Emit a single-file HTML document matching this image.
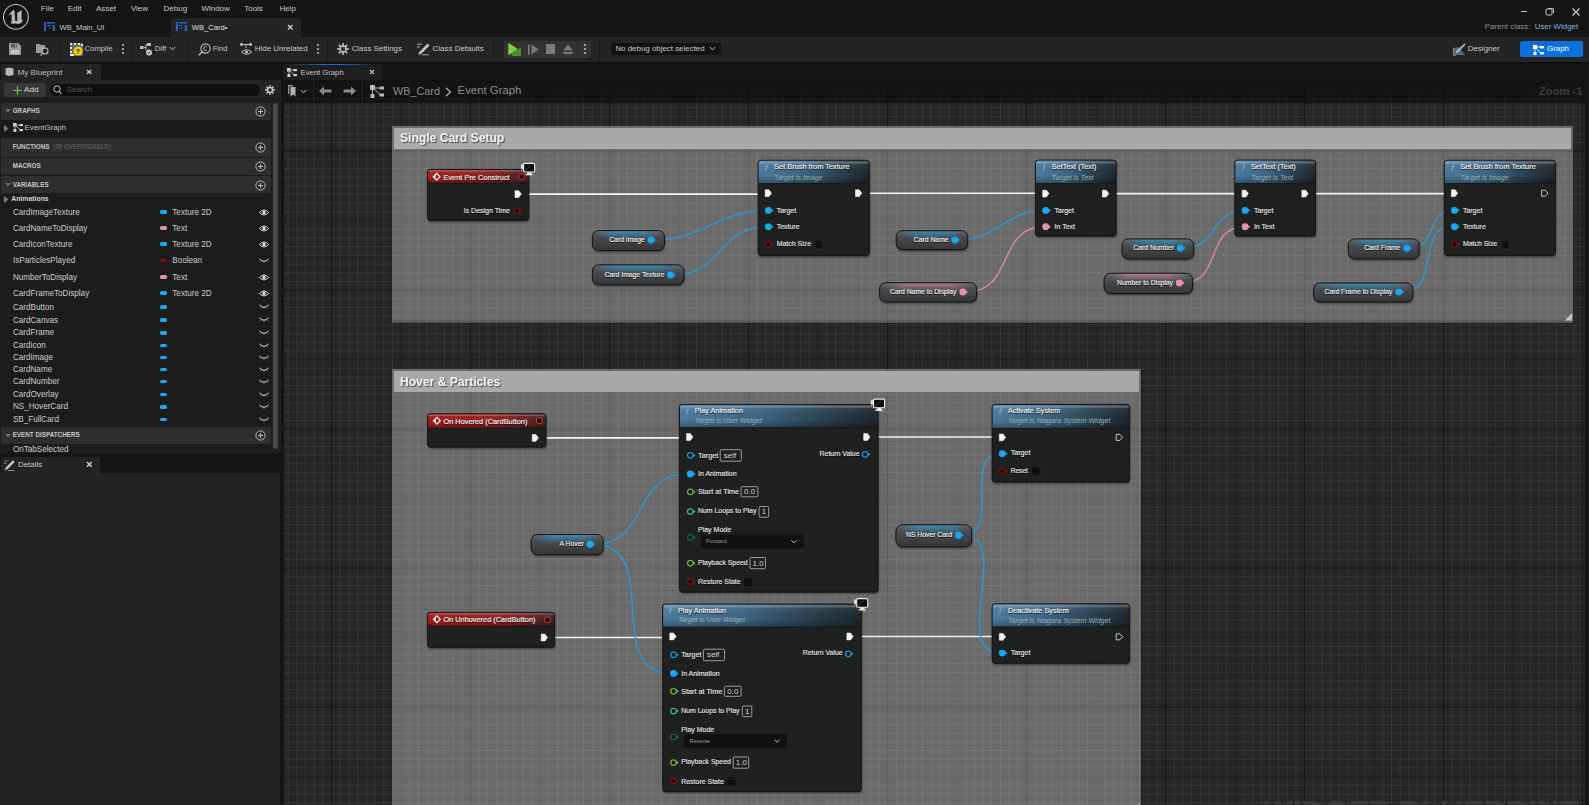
<!DOCTYPE html><html><head><meta charset="utf-8"><style>
html,body{margin:0;padding:0;width:1589px;height:805px;overflow:hidden;background:#151515;font-family:"Liberation Sans",sans-serif;}
.t{position:absolute;white-space:nowrap;line-height:1;}
.r{position:absolute;}
svg{position:absolute;}
</style></head><body>

<div class="r" style="left:0.00px;top:0.00px;width:1589.00px;height:37.00px;background:#151515;"></div>
<svg style="left:0px;top:0px" width="32" height="32" viewBox="0 0 32 32">
<circle cx="15.9" cy="16.9" r="12.4" fill="none" stroke="#bdbdbd" stroke-width="1.1"/>
<path d="M8.1 15.7 Q10.5 12 13.6 9.7 L14.6 11.3 L15.2 20.5 Q16 21.5 17.3 20.8 L17.2 13.1 Q19.4 11 22.1 10.3 Q21.4 12.5 21.6 14 L21.6 19.5 Q22.2 20.2 23.3 19.7 Q21.8 23.3 19.1 23.8 Q17.5 24.2 15.6 23.2 Q13.2 24.6 10.9 22.9 Q11.8 21.5 11.6 19.5 L11.6 14.6 Q9.8 14.7 8.1 15.7 Z" fill="#b4b4b4"/>
</svg>
<div class="t" style="left:40.80px;top:4.60px;font-size:8px;color:#c8c8c8;">File</div>
<div class="t" style="left:67.70px;top:4.60px;font-size:8px;color:#c8c8c8;">Edit</div>
<div class="t" style="left:95.90px;top:4.60px;font-size:8px;color:#c8c8c8;">Asset</div>
<div class="t" style="left:130.90px;top:4.60px;font-size:8px;color:#c8c8c8;">View</div>
<div class="t" style="left:163.60px;top:4.60px;font-size:8px;color:#c8c8c8;">Debug</div>
<div class="t" style="left:201.40px;top:4.60px;font-size:8px;color:#c8c8c8;">Window</div>
<div class="t" style="left:244.20px;top:4.60px;font-size:8px;color:#c8c8c8;">Tools</div>
<div class="t" style="left:279.40px;top:4.60px;font-size:8px;color:#c8c8c8;">Help</div>
<div class="r" style="left:171.00px;top:17.60px;width:130.00px;height:19.40px;background:#242424;border-radius:3px 3px 0 0;"></div>
<svg style="left:43.8px;top:22px" width="11" height="9" viewBox="0 0 11 9"><rect x="0" y="0" width="2" height="9" fill="#2d5fb0"/><rect x="3" y="0" width="8" height="1.6" fill="#2d5fb0"/><rect x="3" y="3" width="3.2" height="1.4" fill="#2d5fb0"/><rect x="8.6" y="3" width="2.4" height="6" fill="#2d5fb0"/><path d="M4.5 5.5 L7 5.5 L5.8 7 Z" fill="#2d5fb0"/></svg>
<div class="t" style="left:59.60px;top:23.74px;font-size:7.6px;color:#c8c8c8;">WB_Main_UI</div>
<svg style="left:176px;top:22px" width="11" height="9" viewBox="0 0 11 9"><rect x="0" y="0" width="2" height="9" fill="#2d5fb0"/><rect x="3" y="0" width="8" height="1.6" fill="#2d5fb0"/><rect x="3" y="3" width="3.2" height="1.4" fill="#2d5fb0"/><rect x="8.6" y="3" width="2.4" height="6" fill="#2d5fb0"/><path d="M4.5 5.5 L7 5.5 L5.8 7 Z" fill="#2d5fb0"/></svg>
<div class="t" style="left:191.80px;top:23.74px;font-size:7.6px;color:#e0e0e0;">WB_Card•</div>
<svg style="left:287.00px;top:24.20px" width="6.50" height="6.50"><path d="M1 1 L5.50 5.50 M5.50 1 L1 5.50" stroke="#d0d0d0" stroke-width="1.3"/></svg>
<div class="r" style="left:1520.70px;top:10.80px;width:6.00px;height:1.00px;background:#bfbfbf;"></div>
<svg style="left:1545px;top:7px" width="10" height="9" viewBox="0 0 10 9"><rect x="1" y="2" width="6" height="6" rx="1" fill="none" stroke="#c0c0c0" stroke-width="1"/><path d="M3 1.5 H8 Q8.5 1.5 8.5 2 V6" fill="none" stroke="#c0c0c0" stroke-width="1"/></svg>
<svg style="left:1571px;top:7px" width="10" height="10" viewBox="0 0 10 10"><path d="M1.5 1.5 L8.5 8.5 M8.5 1.5 L1.5 8.5" stroke="#d0d0d0" stroke-width="1.1"/></svg>
<div class="t" style="left:1484.80px;top:22.79px;font-size:7.9px;color:#8d8d8d;">Parent class:</div>
<div class="t" style="left:1534.70px;top:22.79px;font-size:7.9px;color:#7fb2ea;">User Widget</div>
<div class="r" style="left:0.00px;top:37.00px;width:1589.00px;height:25.00px;background:#242424;"></div>
<div class="r" style="left:59.00px;top:38.00px;width:1.00px;height:23.00px;background:#1b1b1b;"></div>
<div class="r" style="left:131.50px;top:38.00px;width:1.00px;height:23.00px;background:#1b1b1b;"></div>
<div class="r" style="left:187.50px;top:38.00px;width:1.00px;height:23.00px;background:#1b1b1b;"></div>
<div class="r" style="left:326.60px;top:38.00px;width:1.00px;height:23.00px;background:#1b1b1b;"></div>
<div class="r" style="left:492.60px;top:38.00px;width:1.00px;height:23.00px;background:#1b1b1b;"></div>
<div class="r" style="left:599.00px;top:38.00px;width:1.00px;height:23.00px;background:#1b1b1b;"></div>
<svg style="left:8.8px;top:43px" width="12" height="12" viewBox="0 0 12 12"><path d="M0 0 H9 L12 3 V12 H0 Z" fill="#9a9a9a"/><rect x="2" y="0.8" width="6" height="3.6" fill="#5a5a5a"/><rect x="6" y="1.3" width="1.2" height="2.4" fill="#9a9a9a"/><rect x="2" y="7" width="8" height="3.8" fill="#c8c8c8"/></svg>
<svg style="left:35.9px;top:43px" width="13" height="13" viewBox="0 0 13 13"><path d="M0 1 H4 L5 2 H9 V6 H6 V10 H0 Z" fill="#9a9a9a"/><circle cx="9" cy="8" r="3" fill="none" stroke="#bdbdbd" stroke-width="1.1"/><path d="M7 10 L4.5 12.5" stroke="#bdbdbd" stroke-width="1.2"/></svg>
<svg style="left:69.6px;top:43px" width="13" height="13" viewBox="0 0 13 13"><rect x="0" y="0" width="13" height="13" fill="#9a9a9a" opacity="0.55"/><path d="M0 0h2v2h-2zM4 0h2v2h-2zM8 0h2v2h-2zM11 1h2v2h-2zM0 4h2v2h-2zM0 8h2v2h-2zM0 11h4v2h-4z" fill="#e8e8e8"/><circle cx="8" cy="8" r="4.6" fill="#f0d000"/><text x="8" y="10.6" font-size="7" font-weight="bold" text-anchor="middle" fill="#222" font-family="Liberation Sans">?</text></svg>
<div class="t" style="left:84.60px;top:45.19px;font-size:7.66px;color:#c8c8c8;">Compile</div>
<div class="r" style="left:122.00px;top:43.90px;width:2.00px;height:2.00px;background:#a8a8a8;border-radius:0.5px;"></div>
<div class="r" style="left:122.00px;top:48.00px;width:2.00px;height:2.00px;background:#a8a8a8;border-radius:0.5px;"></div>
<div class="r" style="left:122.00px;top:52.10px;width:2.00px;height:2.00px;background:#a8a8a8;border-radius:0.5px;"></div>
<svg style="left:139.7px;top:43px" width="13" height="13" viewBox="0 0 13 13"><rect x="0" y="3" width="3.5" height="3" fill="#bbb"/><rect x="7" y="0" width="4" height="3" fill="#bbb"/><path d="M3.5 4.5 H6 V1.5 H7 M6 4.5 V7" stroke="#bbb" stroke-width="1" fill="none"/><circle cx="9" cy="9.5" r="3" fill="#ccc"/><path d="M7.6 9.5 L8.7 10.6 L10.5 8.5" stroke="#333" stroke-width="1" fill="none"/></svg>
<div class="t" style="left:154.80px;top:45.16px;font-size:7.7px;color:#c8c8c8;">Diff</div>
<svg style="left:169px;top:46px" width="7" height="5" viewBox="0 0 7 5"><path d="M0.8 1 L3.5 3.8 L6.2 1" stroke="#c0c0c0" stroke-width="1" fill="none"/></svg>
<svg style="left:198px;top:43px" width="13" height="13" viewBox="0 0 13 13"><circle cx="7.5" cy="5.5" r="4.6" fill="none" stroke="#c0c0c0" stroke-width="1.1"/><path d="M4.2 8.8 L0.8 12.2" stroke="#c0c0c0" stroke-width="1.3"/><path d="M8.8 3.8 A2 2 0 1 0 8.8 7.2" stroke="#c0c0c0" stroke-width="1" fill="none"/></svg>
<div class="t" style="left:212.70px;top:45.24px;font-size:7.6px;color:#c8c8c8;">Find</div>
<svg style="left:239.7px;top:43px" width="13" height="13" viewBox="0 0 13 13"><circle cx="1.5" cy="1.5" r="1.4" fill="#ccc"/><circle cx="10.5" cy="1.5" r="1.4" fill="#ccc"/><path d="M1.5 1.5 H10.5 M6 1.5 V5" stroke="#ccc" stroke-width="0.9"/><path d="M1.5 9 Q6.5 4.5 11.5 9 Q6.5 13.5 1.5 9Z" fill="none" stroke="#ccc" stroke-width="0.9"/><circle cx="6.5" cy="9" r="1.4" fill="#ccc"/></svg>
<div class="t" style="left:254.80px;top:44.96px;font-size:7.93px;color:#c8c8c8;">Hide Unrelated</div>
<div class="r" style="left:316.60px;top:43.90px;width:2.00px;height:2.00px;background:#a8a8a8;border-radius:0.5px;"></div>
<div class="r" style="left:316.60px;top:48.00px;width:2.00px;height:2.00px;background:#a8a8a8;border-radius:0.5px;"></div>
<div class="r" style="left:316.60px;top:52.10px;width:2.00px;height:2.00px;background:#a8a8a8;border-radius:0.5px;"></div>
<svg style="left:337.3px;top:43px" width="12" height="12" viewBox="0 0 12 12"><g stroke="#c0c0c0" stroke-width="1.6"><path d="M6 0 V12 M0 6 H12 M1.8 1.8 L10.2 10.2 M10.2 1.8 L1.8 10.2"/></g><circle cx="6" cy="6" r="3.8" fill="#c0c0c0"/><rect x="4" y="4" width="4" height="4" fill="#3a3a3a"/></svg>
<div class="t" style="left:351.70px;top:45.01px;font-size:7.87px;color:#c8c8c8;">Class Settings</div>
<svg style="left:417px;top:43px" width="13" height="13" viewBox="0 0 13 13"><path d="M0 1.2 H5 M0 4 H3" stroke="#bbb" stroke-width="0.9"/><path d="M10.5 0.5 L12.5 2.5 L4 11 L1.5 12 L2 9.5 Z" fill="#c8c8c8"/><path d="M5 11.8 H12" stroke="#bbb" stroke-width="0.9"/></svg>
<div class="t" style="left:432.60px;top:44.95px;font-size:7.94px;color:#c8c8c8;">Class Defaults</div>
<div class="r" style="left:504.00px;top:40.70px;width:87.00px;height:17.00px;background:#333333;border-radius:2px;"></div>
<div class="r" style="left:577.00px;top:40.70px;width:1.00px;height:17.00px;background:#2a2a2a;"></div>
<svg style="left:508px;top:42.5px" width="14" height="13" viewBox="0 0 14 13"><path d="M0.5 0 L9.5 6 L0.5 12 Z" fill="#72c43e"/><path d="M3.5 8 L13 5 V13 H3.5 Z" fill="#4d8b2c"/><path d="M0.5 0 L9.5 6 L0.5 12 Z" fill="#7fd447" opacity="0.9"/></svg>
<svg style="left:527.9px;top:43.5px" width="11" height="11" viewBox="0 0 11 11"><rect x="0" y="0.5" width="1.7" height="10" fill="#7a7a7a"/><path d="M3.5 0.5 L10.5 5.5 L3.5 10.5 Z" fill="#7a7a7a"/></svg>
<div class="r" style="left:546.00px;top:44.00px;width:9.00px;height:9.50px;background:#7a7a7a;"></div>
<svg style="left:562.5px;top:43.5px" width="10" height="11" viewBox="0 0 10 11"><path d="M5 0.5 L9.8 6.5 H0.2 Z" fill="#7a7a7a"/><rect x="0.2" y="8" width="9.6" height="2" fill="#7a7a7a"/></svg>
<div class="r" style="left:584.00px;top:43.90px;width:2.00px;height:2.00px;background:#a8a8a8;border-radius:0.5px;"></div>
<div class="r" style="left:584.00px;top:48.00px;width:2.00px;height:2.00px;background:#a8a8a8;border-radius:0.5px;"></div>
<div class="r" style="left:584.00px;top:52.10px;width:2.00px;height:2.00px;background:#a8a8a8;border-radius:0.5px;"></div>
<div class="r" style="left:611.00px;top:42.50px;width:110.00px;height:12.40px;background:#121212;border-radius:2px;"></div>
<div class="t" style="left:615.40px;top:44.78px;font-size:7.91px;color:#c8c8c8;">No debug object selected</div>
<svg style="left:708.5px;top:46px" width="7" height="5" viewBox="0 0 7 5"><path d="M0.8 1 L3.5 3.8 L6.2 1" stroke="#c0c0c0" stroke-width="1" fill="none"/></svg>
<svg style="left:1453px;top:42.5px" width="13" height="13" viewBox="0 0 13 13"><path d="M0.5 5 L6 4 L12 12 L1 12 Z" fill="#607a90" opacity="0.8"/><path d="M11.5 0.5 L12.5 1.5 L5 9.5 L3 10 L3.5 8 Z" fill="#a9c0d6"/><path d="M0.5 5 L0.5 12.5 M0.5 12.5 H3" stroke="#999" stroke-width="0.8"/></svg>
<div class="t" style="left:1467.70px;top:44.93px;font-size:7.97px;color:#c8c8c8;">Designer</div>
<div class="r" style="left:1520.20px;top:41.30px;width:62.40px;height:15.50px;background:#0b70d9;border-radius:2px;"></div>
<svg style="left:1533px;top:44.5px" width="11" height="10" viewBox="0 0 11 10"><rect x="0" y="0" width="4" height="4" fill="#fff"/><rect x="7" y="1" width="4" height="2.4" fill="#fff"/><rect x="0.5" y="7" width="3" height="3" fill="#fff"/><rect x="7" y="7" width="4" height="2.4" fill="#fff"/><path d="M2 4 V8 M4 2 H7 M3 3 L7.5 8" stroke="#fff" stroke-width="0.9"/></svg>
<div class="t" style="left:1547.00px;top:44.98px;font-size:7.9px;color:#ffffff;">Graph</div>
<div class="r" style="left:0.00px;top:62.00px;width:1589.00px;height:2.00px;background:#101010;"></div>
<div class="r" style="left:0.00px;top:64.00px;width:281.00px;height:741.00px;background:#151515;"></div>
<div class="r" style="left:1.40px;top:64.00px;width:99.20px;height:16.00px;background:#242424;border-radius:3px 3px 0 0;"></div>
<svg style="left:4.7px;top:66.5px" width="9" height="10" viewBox="0 0 9 10"><path d="M0.5 1.5 L4 0.5 L8.5 1.5 V8.5 L4 9.5 L0.5 8.5 Z" fill="#b8b8b8"/><path d="M0.5 8.5 L4 9.5 L8.5 8.5" stroke="#000" stroke-width="0.8" fill="none"/></svg>
<div class="t" style="left:17.50px;top:68.71px;font-size:8.1px;color:#bdbdbd;">My Blueprint</div>
<svg style="left:86.30px;top:68.90px" width="6.30" height="5.80"><path d="M1 1 L5.30 4.80 M5.30 1 L1 4.80" stroke="#d0d0d0" stroke-width="1.3"/></svg>
<div class="r" style="left:0.00px;top:80.00px;width:281.00px;height:22.00px;background:#242424;"></div>
<div class="r" style="left:4.20px;top:83.10px;width:41.80px;height:13.70px;background:#383838;border-radius:2px;"></div>
<svg style="left:13px;top:85.5px" width="9" height="9" viewBox="0 0 9 9"><path d="M4.5 0.3 V8.7 M0.3 4.5 H8.7" stroke="#6ccf3c" stroke-width="1.1"/></svg>
<div class="t" style="left:24.00px;top:86.31px;font-size:8.1px;color:#d8d8d8;">Add</div>
<div class="r" style="left:50.00px;top:84.00px;width:210.00px;height:11.90px;background:#0e0e0e;border-radius:6px;"></div>
<svg style="left:52.9px;top:85.3px" width="9" height="10" viewBox="0 0 9 10"><circle cx="4" cy="4" r="3.2" fill="none" stroke="#c0c0c0" stroke-width="1"/><path d="M6.2 6.4 L8.5 9" stroke="#c0c0c0" stroke-width="1.1"/></svg>
<div class="t" style="left:66.60px;top:86.00px;font-size:8.0px;color:#555555;">Search</div>
<svg style="left:265px;top:84.5px" width="10" height="10" viewBox="0 0 10 10"><g stroke="#c8c8c8" stroke-width="1.3"><path d="M5 0 V10 M0 5 H10 M1.5 1.5 L8.5 8.5 M8.5 1.5 L1.5 8.5"/></g><circle cx="5" cy="5" r="3.3" fill="#c8c8c8"/><circle cx="5" cy="5" r="1.8" fill="#242424"/></svg>
<div class="r" style="left:0.00px;top:97.00px;width:281.00px;height:5.00px;background:#1e1e1e;"></div>
<div class="r" style="left:0.00px;top:102.00px;width:272.00px;height:351.00px;background:#1c1c1c;"></div>
<div class="r" style="left:272.00px;top:102.00px;width:9.00px;height:351.00px;background:#1f1f1f;"></div>
<div class="r" style="left:273.00px;top:102.70px;width:5.00px;height:346.00px;background:#4a4a4a;border-radius:2.5px;"></div>
<div class="r" style="left:1.20px;top:102.50px;width:269.70px;height:17.10px;background:#2e2e2e;"></div>
<svg style="left:4.8px;top:109.05px" width="6" height="4" viewBox="0 0 6 4"><path d="M0 0 H6 L3 3.5Z" fill="#6e6e6e"/></svg>
<div class="t" style="left:12.70px;top:107.89px;font-size:6.3px;color:#c6c6c6;font-weight:bold;">GRAPHS</div>
<svg style="left:255.00px;top:105.85px" width="11" height="11" viewBox="0 0 11 11"><circle cx="5.5" cy="5.5" r="4.6" fill="none" stroke="#c8c8c8" stroke-width="0.9"/><path d="M5.5 3 V8 M3 5.5 H8" stroke="#c8c8c8" stroke-width="0.9"/></svg>
<div class="r" style="left:1.20px;top:119.60px;width:269.70px;height:17.10px;background:#1a1a1a;"></div>
<svg style="left:4.2px;top:124.5px" width="5" height="7" viewBox="0 0 5 7"><path d="M0 0 L4.5 3.5 L0 7Z" fill="#7a7a7a"/></svg>
<svg style="left:13px;top:123px" width="10" height="9" viewBox="0 0 10 9"><rect x="0" y="0" width="3.6" height="3.6" fill="#d0d0d0"/><rect x="6.4" y="1" width="3.6" height="2.2" fill="#d0d0d0"/><rect x="0.4" y="6" width="3" height="3" fill="#d0d0d0"/><rect x="6.4" y="6" width="3.6" height="2.2" fill="#d0d0d0"/><path d="M3.6 2 H6.4 M2 3.6 V6 M3 3 L6.8 6.5" stroke="#d0d0d0" stroke-width="0.8"/></svg>
<div class="t" style="left:24.60px;top:124.17px;font-size:7.8px;color:#c6c6c6;">EventGraph</div>
<div class="r" style="left:1.20px;top:136.70px;width:269.70px;height:1.00px;background:#1a1a1a;"></div>
<div class="r" style="left:1.20px;top:137.70px;width:269.70px;height:19.30px;background:#2e2e2e;"></div>
<div class="t" style="left:12.70px;top:144.19px;font-size:6.3px;color:#c6c6c6;font-weight:bold;">FUNCTIONS</div>
<div class="t" style="left:53.00px;top:144.19px;font-size:6.3px;color:#6a6a6a;">(38 OVERRIDABLE)</div>
<svg style="left:255.00px;top:142.15px" width="11" height="11" viewBox="0 0 11 11"><circle cx="5.5" cy="5.5" r="4.6" fill="none" stroke="#c8c8c8" stroke-width="0.9"/><path d="M5.5 3 V8 M3 5.5 H8" stroke="#c8c8c8" stroke-width="0.9"/></svg>
<div class="r" style="left:1.20px;top:157.00px;width:269.70px;height:1.40px;background:#1a1a1a;"></div>
<div class="r" style="left:1.20px;top:158.40px;width:269.70px;height:16.40px;background:#2e2e2e;"></div>
<div class="t" style="left:12.70px;top:163.45px;font-size:6.3px;color:#c6c6c6;font-weight:bold;">MACROS</div>
<svg style="left:255.00px;top:161.40px" width="11" height="11" viewBox="0 0 11 11"><circle cx="5.5" cy="5.5" r="4.6" fill="none" stroke="#c8c8c8" stroke-width="0.9"/><path d="M5.5 3 V8 M3 5.5 H8" stroke="#c8c8c8" stroke-width="0.9"/></svg>
<div class="r" style="left:1.20px;top:174.80px;width:269.70px;height:1.50px;background:#1a1a1a;"></div>
<div class="r" style="left:1.20px;top:176.30px;width:269.70px;height:17.10px;background:#2e2e2e;"></div>
<svg style="left:4.8px;top:182.85px" width="6" height="4" viewBox="0 0 6 4"><path d="M0 0 H6 L3 3.5Z" fill="#6e6e6e"/></svg>
<div class="t" style="left:12.70px;top:181.70px;font-size:6.3px;color:#c6c6c6;font-weight:bold;">VARIABLES</div>
<svg style="left:255.00px;top:179.65px" width="11" height="11" viewBox="0 0 11 11"><circle cx="5.5" cy="5.5" r="4.6" fill="none" stroke="#c8c8c8" stroke-width="0.9"/><path d="M5.5 3 V8 M3 5.5 H8" stroke="#c8c8c8" stroke-width="0.9"/></svg>
<svg style="left:4.2px;top:195.5px" width="5" height="7" viewBox="0 0 5 7"><path d="M0 0 L4.5 3.5 L0 7Z" fill="#7a7a7a"/></svg>
<div class="t" style="left:11.20px;top:195.94px;font-size:6.9px;color:#d4d4d4;font-weight:bold;">Animations</div>
<div class="t" style="left:12.90px;top:208.57px;font-size:8.15px;color:#cccccc;">CardImageTexture</div>
<div class="r" style="left:160.00px;top:210.40px;width:7.20px;height:3.30px;background:#1ea7f0;border-radius:1.6px;"></div>
<div class="t" style="left:172.30px;top:208.57px;font-size:8.15px;color:#cccccc;">Texture 2D</div>
<svg style="left:258.60px;top:208.50px" width="10" height="7" viewBox="0 0 10 7"><path d="M0.5 3.5 Q5 -1.5 9.5 3.5 Q5 8.5 0.5 3.5Z" fill="none" stroke="#e0e0e0" stroke-width="1"/><circle cx="5" cy="3.5" r="1.7" fill="#e0e0e0"/></svg>
<div class="t" style="left:12.90px;top:224.57px;font-size:8.15px;color:#cccccc;">CardNameToDisplay</div>
<div class="r" style="left:160.00px;top:226.40px;width:7.20px;height:3.30px;background:#e58fb3;border-radius:1.6px;"></div>
<div class="t" style="left:172.30px;top:224.57px;font-size:8.15px;color:#cccccc;">Text</div>
<svg style="left:258.60px;top:224.50px" width="10" height="7" viewBox="0 0 10 7"><path d="M0.5 3.5 Q5 -1.5 9.5 3.5 Q5 8.5 0.5 3.5Z" fill="none" stroke="#e0e0e0" stroke-width="1"/><circle cx="5" cy="3.5" r="1.7" fill="#e0e0e0"/></svg>
<div class="t" style="left:12.90px;top:240.57px;font-size:8.15px;color:#cccccc;">CardIconTexture</div>
<div class="r" style="left:160.00px;top:242.40px;width:7.20px;height:3.30px;background:#1ea7f0;border-radius:1.6px;"></div>
<div class="t" style="left:172.30px;top:240.57px;font-size:8.15px;color:#cccccc;">Texture 2D</div>
<svg style="left:258.60px;top:240.50px" width="10" height="7" viewBox="0 0 10 7"><path d="M0.5 3.5 Q5 -1.5 9.5 3.5 Q5 8.5 0.5 3.5Z" fill="none" stroke="#e0e0e0" stroke-width="1"/><circle cx="5" cy="3.5" r="1.7" fill="#e0e0e0"/></svg>
<div class="t" style="left:12.90px;top:256.87px;font-size:8.15px;color:#cccccc;">IsParticlesPlayed</div>
<div class="r" style="left:160.00px;top:258.70px;width:7.20px;height:3.30px;background:#8a0c0c;border-radius:1.6px;"></div>
<div class="t" style="left:172.30px;top:256.87px;font-size:8.15px;color:#cccccc;">Boolean</div>
<svg style="left:258.60px;top:257.70px" width="10" height="6" viewBox="0 0 10 6"><path d="M0.4 0.8 Q5 5.6 9.6 0.8" fill="none" stroke="#d8d8d8" stroke-width="1.0"/><path d="M2.3 2.6 L1.7 3.9 M5 3.6 V5 M7.7 2.6 L8.3 3.9" stroke="#bbbbbb" stroke-width="0.6"/></svg>
<div class="t" style="left:12.90px;top:273.57px;font-size:8.15px;color:#cccccc;">NumberToDisplay</div>
<div class="r" style="left:160.00px;top:275.40px;width:7.20px;height:3.30px;background:#e58fb3;border-radius:1.6px;"></div>
<div class="t" style="left:172.30px;top:273.57px;font-size:8.15px;color:#cccccc;">Text</div>
<svg style="left:258.60px;top:273.50px" width="10" height="7" viewBox="0 0 10 7"><path d="M0.5 3.5 Q5 -1.5 9.5 3.5 Q5 8.5 0.5 3.5Z" fill="none" stroke="#e0e0e0" stroke-width="1"/><circle cx="5" cy="3.5" r="1.7" fill="#e0e0e0"/></svg>
<div class="t" style="left:12.90px;top:289.57px;font-size:8.15px;color:#cccccc;">CardFrameToDisplay</div>
<div class="r" style="left:160.00px;top:291.40px;width:7.20px;height:3.30px;background:#1ea7f0;border-radius:1.6px;"></div>
<div class="t" style="left:172.30px;top:289.57px;font-size:8.15px;color:#cccccc;">Texture 2D</div>
<svg style="left:258.60px;top:289.50px" width="10" height="7" viewBox="0 0 10 7"><path d="M0.5 3.5 Q5 -1.5 9.5 3.5 Q5 8.5 0.5 3.5Z" fill="none" stroke="#e0e0e0" stroke-width="1"/><circle cx="5" cy="3.5" r="1.7" fill="#e0e0e0"/></svg>
<div class="t" style="left:12.90px;top:303.57px;font-size:8.15px;color:#cccccc;">CardButton</div>
<div class="r" style="left:160.00px;top:305.40px;width:7.20px;height:3.30px;background:#1ea7f0;border-radius:1.6px;"></div>
<svg style="left:258.60px;top:304.40px" width="10" height="6" viewBox="0 0 10 6"><path d="M0.4 0.8 Q5 5.6 9.6 0.8" fill="none" stroke="#d8d8d8" stroke-width="1.0"/><path d="M2.3 2.6 L1.7 3.9 M5 3.6 V5 M7.7 2.6 L8.3 3.9" stroke="#bbbbbb" stroke-width="0.6"/></svg>
<div class="t" style="left:12.90px;top:316.57px;font-size:8.15px;color:#cccccc;">CardCanvas</div>
<div class="r" style="left:160.00px;top:318.40px;width:7.20px;height:3.30px;background:#1ea7f0;border-radius:1.6px;"></div>
<svg style="left:258.60px;top:317.40px" width="10" height="6" viewBox="0 0 10 6"><path d="M0.4 0.8 Q5 5.6 9.6 0.8" fill="none" stroke="#d8d8d8" stroke-width="1.0"/><path d="M2.3 2.6 L1.7 3.9 M5 3.6 V5 M7.7 2.6 L8.3 3.9" stroke="#bbbbbb" stroke-width="0.6"/></svg>
<div class="t" style="left:12.90px;top:329.47px;font-size:8.15px;color:#cccccc;">CardFrame</div>
<div class="r" style="left:160.00px;top:331.30px;width:7.20px;height:3.30px;background:#1ea7f0;border-radius:1.6px;"></div>
<svg style="left:258.60px;top:330.30px" width="10" height="6" viewBox="0 0 10 6"><path d="M0.4 0.8 Q5 5.6 9.6 0.8" fill="none" stroke="#d8d8d8" stroke-width="1.0"/><path d="M2.3 2.6 L1.7 3.9 M5 3.6 V5 M7.7 2.6 L8.3 3.9" stroke="#bbbbbb" stroke-width="0.6"/></svg>
<div class="t" style="left:12.90px;top:341.67px;font-size:8.15px;color:#cccccc;">CardIcon</div>
<div class="r" style="left:160.00px;top:343.50px;width:7.20px;height:3.30px;background:#1ea7f0;border-radius:1.6px;"></div>
<svg style="left:258.60px;top:342.50px" width="10" height="6" viewBox="0 0 10 6"><path d="M0.4 0.8 Q5 5.6 9.6 0.8" fill="none" stroke="#d8d8d8" stroke-width="1.0"/><path d="M2.3 2.6 L1.7 3.9 M5 3.6 V5 M7.7 2.6 L8.3 3.9" stroke="#bbbbbb" stroke-width="0.6"/></svg>
<div class="t" style="left:12.90px;top:354.27px;font-size:8.15px;color:#cccccc;">CardImage</div>
<div class="r" style="left:160.00px;top:356.10px;width:7.20px;height:3.30px;background:#1ea7f0;border-radius:1.6px;"></div>
<svg style="left:258.60px;top:355.10px" width="10" height="6" viewBox="0 0 10 6"><path d="M0.4 0.8 Q5 5.6 9.6 0.8" fill="none" stroke="#d8d8d8" stroke-width="1.0"/><path d="M2.3 2.6 L1.7 3.9 M5 3.6 V5 M7.7 2.6 L8.3 3.9" stroke="#bbbbbb" stroke-width="0.6"/></svg>
<div class="t" style="left:12.90px;top:365.67px;font-size:8.15px;color:#cccccc;">CardName</div>
<div class="r" style="left:160.00px;top:367.50px;width:7.20px;height:3.30px;background:#1ea7f0;border-radius:1.6px;"></div>
<svg style="left:258.60px;top:366.50px" width="10" height="6" viewBox="0 0 10 6"><path d="M0.4 0.8 Q5 5.6 9.6 0.8" fill="none" stroke="#d8d8d8" stroke-width="1.0"/><path d="M2.3 2.6 L1.7 3.9 M5 3.6 V5 M7.7 2.6 L8.3 3.9" stroke="#bbbbbb" stroke-width="0.6"/></svg>
<div class="t" style="left:12.90px;top:378.27px;font-size:8.15px;color:#cccccc;">CardNumber</div>
<div class="r" style="left:160.00px;top:380.10px;width:7.20px;height:3.30px;background:#1ea7f0;border-radius:1.6px;"></div>
<svg style="left:258.60px;top:379.10px" width="10" height="6" viewBox="0 0 10 6"><path d="M0.4 0.8 Q5 5.6 9.6 0.8" fill="none" stroke="#d8d8d8" stroke-width="1.0"/><path d="M2.3 2.6 L1.7 3.9 M5 3.6 V5 M7.7 2.6 L8.3 3.9" stroke="#bbbbbb" stroke-width="0.6"/></svg>
<div class="t" style="left:12.90px;top:391.17px;font-size:8.15px;color:#cccccc;">CardOverlay</div>
<div class="r" style="left:160.00px;top:393.00px;width:7.20px;height:3.30px;background:#1ea7f0;border-radius:1.6px;"></div>
<svg style="left:258.60px;top:392.00px" width="10" height="6" viewBox="0 0 10 6"><path d="M0.4 0.8 Q5 5.6 9.6 0.8" fill="none" stroke="#d8d8d8" stroke-width="1.0"/><path d="M2.3 2.6 L1.7 3.9 M5 3.6 V5 M7.7 2.6 L8.3 3.9" stroke="#bbbbbb" stroke-width="0.6"/></svg>
<div class="t" style="left:12.90px;top:403.47px;font-size:8.15px;color:#cccccc;">NS_HoverCard</div>
<div class="r" style="left:160.00px;top:405.30px;width:7.20px;height:3.30px;background:#1ea7f0;border-radius:1.6px;"></div>
<svg style="left:258.60px;top:404.30px" width="10" height="6" viewBox="0 0 10 6"><path d="M0.4 0.8 Q5 5.6 9.6 0.8" fill="none" stroke="#d8d8d8" stroke-width="1.0"/><path d="M2.3 2.6 L1.7 3.9 M5 3.6 V5 M7.7 2.6 L8.3 3.9" stroke="#bbbbbb" stroke-width="0.6"/></svg>
<div class="t" style="left:12.90px;top:416.27px;font-size:8.15px;color:#cccccc;">SB_FullCard</div>
<div class="r" style="left:160.00px;top:418.10px;width:7.20px;height:3.30px;background:#1ea7f0;border-radius:1.6px;"></div>
<svg style="left:258.60px;top:417.10px" width="10" height="6" viewBox="0 0 10 6"><path d="M0.4 0.8 Q5 5.6 9.6 0.8" fill="none" stroke="#d8d8d8" stroke-width="1.0"/><path d="M2.3 2.6 L1.7 3.9 M5 3.6 V5 M7.7 2.6 L8.3 3.9" stroke="#bbbbbb" stroke-width="0.6"/></svg>
<div class="r" style="left:1.20px;top:427.40px;width:269.70px;height:16.40px;background:#2e2e2e;"></div>
<svg style="left:4.8px;top:433.60px" width="6" height="4" viewBox="0 0 6 4"><path d="M0 0 H6 L3 3.5Z" fill="#6e6e6e"/></svg>
<div class="t" style="left:12.70px;top:432.44px;font-size:6.3px;color:#c6c6c6;font-weight:bold;">EVENT DISPATCHERS</div>
<svg style="left:255.00px;top:430.40px" width="11" height="11" viewBox="0 0 11 11"><circle cx="5.5" cy="5.5" r="4.6" fill="none" stroke="#c8c8c8" stroke-width="0.9"/><path d="M5.5 3 V8 M3 5.5 H8" stroke="#c8c8c8" stroke-width="0.9"/></svg>
<div class="t" style="left:12.90px;top:446.27px;font-size:8.15px;color:#cccccc;">OnTabSelected</div>
<div class="r" style="left:0.00px;top:453.00px;width:281.00px;height:4.00px;background:#151515;"></div>
<div class="r" style="left:1.30px;top:457.00px;width:98.70px;height:15.70px;background:#242424;border-radius:3px 3px 0 0;"></div>
<div class="r" style="left:0.00px;top:472.70px;width:280.00px;height:332.30px;background:#242424;"></div>
<svg style="left:3.9px;top:459.5px" width="11" height="11" viewBox="0 0 11 11"><path d="M0 1 H4 M0 3.5 H2.5 M4 10.5 H10.5" stroke="#9a9a9a" stroke-width="0.8"/><path d="M9 0.3 L10.7 2 L3.5 9.2 L0.8 10.3 L1.8 7.5 Z" fill="#c8c8c8"/></svg>
<div class="t" style="left:17.90px;top:461.20px;font-size:8.0px;color:#c4c4c4;">Details</div>
<svg style="left:86.20px;top:461.00px" width="6.70" height="6.80"><path d="M1 1 L5.70 5.80 M5.70 1 L1 5.80" stroke="#d0d0d0" stroke-width="1.3"/></svg>
<div class="r" style="left:281.00px;top:64.00px;width:3.00px;height:741.00px;background:#151515;"></div>
<div class="r" style="left:1585.00px;top:64.00px;width:4.00px;height:741.00px;background:#151515;"></div>
<div class="r" style="left:283.30px;top:64.00px;width:99.00px;height:15.60px;background:#1e1e1e;border-radius:3px 3px 0 0;"></div>
<div class="r" style="left:290.00px;top:64.00px;width:85.00px;height:1.00px;background:linear-gradient(90deg,rgba(20,100,200,0),#1a6fd0 40%,#1a6fd0 60%,rgba(20,100,200,0));"></div>
<svg style="left:286.9px;top:67.5px" width="10" height="9" viewBox="0 0 10 9"><rect x="0" y="0" width="3.6" height="3.6" fill="#d0d0d0"/><rect x="6.4" y="1" width="3.6" height="2.2" fill="#d0d0d0"/><rect x="0.4" y="6" width="3" height="3" fill="#d0d0d0"/><rect x="6.4" y="6" width="3.6" height="2.2" fill="#d0d0d0"/><path d="M3.6 2 H6.4 M2 3.6 V6 M3 3 L6.8 6.5" stroke="#d0d0d0" stroke-width="0.8"/></svg>
<div class="t" style="left:300.50px;top:68.75px;font-size:7.7px;color:#c8c8c8;">Event Graph</div>
<svg style="left:368.70px;top:68.80px" width="5.90" height="6.10"><path d="M1 1 L4.90 5.10 M4.90 1 L1 5.10" stroke="#b8b8b8" stroke-width="1.3"/></svg>
<svg style="left:284px;top:80px" width="1301" height="725">
<rect width="100%" height="100%" fill="#262626"/>
<path d="M4.16 0V725 M12.85 0V725 M21.54 0V725 M30.23 0V725 M38.91 0V725 M56.29 0V725 M64.98 0V725 M73.66 0V725 M82.35 0V725 M91.04 0V725 M99.73 0V725 M108.41 0V725 M125.79 0V725 M134.48 0V725 M143.16 0V725 M151.85 0V725 M160.54 0V725 M169.23 0V725 M177.91 0V725 M195.29 0V725 M203.98 0V725 M212.66 0V725 M221.35 0V725 M230.04 0V725 M238.73 0V725 M247.41 0V725 M264.79 0V725 M273.48 0V725 M282.16 0V725 M290.85 0V725 M299.54 0V725 M308.23 0V725 M316.91 0V725 M334.29 0V725 M342.98 0V725 M351.66 0V725 M360.35 0V725 M369.04 0V725 M377.73 0V725 M386.41 0V725 M403.79 0V725 M412.48 0V725 M421.16 0V725 M429.85 0V725 M438.54 0V725 M447.23 0V725 M455.91 0V725 M473.29 0V725 M481.98 0V725 M490.66 0V725 M499.35 0V725 M508.04 0V725 M516.73 0V725 M525.41 0V725 M542.79 0V725 M551.48 0V725 M560.16 0V725 M568.85 0V725 M577.54 0V725 M586.23 0V725 M594.91 0V725 M612.29 0V725 M620.98 0V725 M629.66 0V725 M638.35 0V725 M647.04 0V725 M655.73 0V725 M664.41 0V725 M681.79 0V725 M690.48 0V725 M699.16 0V725 M707.85 0V725 M716.54 0V725 M725.23 0V725 M733.91 0V725 M751.29 0V725 M759.98 0V725 M768.66 0V725 M777.35 0V725 M786.04 0V725 M794.73 0V725 M803.41 0V725 M820.79 0V725 M829.48 0V725 M838.16 0V725 M846.85 0V725 M855.54 0V725 M864.23 0V725 M872.91 0V725 M890.29 0V725 M898.98 0V725 M907.66 0V725 M916.35 0V725 M925.04 0V725 M933.73 0V725 M942.41 0V725 M959.79 0V725 M968.48 0V725 M977.16 0V725 M985.85 0V725 M994.54 0V725 M1003.23 0V725 M1011.91 0V725 M1029.29 0V725 M1037.97 0V725 M1046.66 0V725 M1055.35 0V725 M1064.04 0V725 M1072.72 0V725 M1081.41 0V725 M1098.79 0V725 M1107.47 0V725 M1116.16 0V725 M1124.85 0V725 M1133.54 0V725 M1142.22 0V725 M1150.91 0V725 M1168.29 0V725 M1176.97 0V725 M1185.66 0V725 M1194.35 0V725 M1203.04 0V725 M1211.72 0V725 M1220.41 0V725 M1237.79 0V725 M1246.47 0V725 M1255.16 0V725 M1263.85 0V725 M1272.54 0V725 M1281.22 0V725 M1289.91 0V725 M0 10.29H1301 M0 18.97H1301 M0 27.66H1301 M0 36.35H1301 M0 45.04H1301 M0 53.72H1301 M0 62.41H1301 M0 79.79H1301 M0 88.47H1301 M0 97.16H1301 M0 105.85H1301 M0 114.54H1301 M0 123.22H1301 M0 131.91H1301 M0 149.29H1301 M0 157.97H1301 M0 166.66H1301 M0 175.35H1301 M0 184.04H1301 M0 192.72H1301 M0 201.41H1301 M0 218.79H1301 M0 227.47H1301 M0 236.16H1301 M0 244.85H1301 M0 253.54H1301 M0 262.23H1301 M0 270.91H1301 M0 288.29H1301 M0 296.98H1301 M0 305.66H1301 M0 314.35H1301 M0 323.04H1301 M0 331.73H1301 M0 340.41H1301 M0 357.79H1301 M0 366.48H1301 M0 375.16H1301 M0 383.85H1301 M0 392.54H1301 M0 401.23H1301 M0 409.91H1301 M0 427.29H1301 M0 435.98H1301 M0 444.66H1301 M0 453.35H1301 M0 462.04H1301 M0 470.73H1301 M0 479.41H1301 M0 496.79H1301 M0 505.48H1301 M0 514.16H1301 M0 522.85H1301 M0 531.54H1301 M0 540.23H1301 M0 548.91H1301 M0 566.29H1301 M0 574.98H1301 M0 583.66H1301 M0 592.35H1301 M0 601.04H1301 M0 609.73H1301 M0 618.41H1301 M0 635.79H1301 M0 644.48H1301 M0 653.16H1301 M0 661.85H1301 M0 670.54H1301 M0 679.23H1301 M0 687.91H1301 M0 705.29H1301 M0 713.98H1301 M0 722.66H1301" stroke="#393939" stroke-width="0.9" fill="none"/>
<path d="M117.10 0V725 M256.10 0V725 M395.10 0V725 M534.10 0V725 M673.10 0V725 M812.10 0V725 M951.10 0V725 M1090.10 0V725 M1229.10 0V725 M0 1.60H1301 M0 140.60H1301 M0 279.60H1301 M0 418.60H1301 M0 557.60H1301 M0 696.60H1301" stroke="#202020" stroke-width="0.8" fill="none"/>
<path d="M47.60 0V725 M186.60 0V725 M325.60 0V725 M464.60 0V725 M603.60 0V725 M742.60 0V725 M881.60 0V725 M1020.60 0V725 M1159.60 0V725 M1298.60 0V725 M0 71.10H1301 M0 210.10H1301 M0 349.10H1301 M0 488.10H1301 M0 627.10H1301" stroke="#151515" stroke-width="1.0" fill="none"/>
</svg>
<div class="r" style="left:392.00px;top:126.00px;width:1181.00px;height:196.50px;background:rgba(255,255,255,0.315);box-shadow:0 0 1.5px 0.5px rgba(0,0,0,0.55), inset 0 -3px 3px -1px rgba(0,0,0,0.25);"></div>
<div class="r" style="left:394.00px;top:128.00px;width:1177.00px;height:21.00px;background:#a9a9a9;"></div>
<div class="t" style="left:400.00px;top:132.22px;font-size:12.1px;color:#f4f4f4;font-weight:bold;text-shadow:1px 1px 1px rgba(0,0,0,0.6);">Single Card Setup</div>
<div class="r" style="left:392.00px;top:369.30px;width:748.50px;height:445.70px;background:rgba(255,255,255,0.315);box-shadow:0 0 1.5px 0.5px rgba(0,0,0,0.55), inset 0 -3px 3px -1px rgba(0,0,0,0.25);"></div>
<div class="r" style="left:394.00px;top:371.30px;width:744.50px;height:21.00px;background:#a9a9a9;"></div>
<div class="t" style="left:400.00px;top:375.51px;font-size:12.1px;color:#f4f4f4;font-weight:bold;text-shadow:1px 1px 1px rgba(0,0,0,0.6);">Hover &amp; Particles</div>
<div class="r" style="left:284.00px;top:80.00px;width:1301.00px;height:23.00px;background:rgba(12,12,12,0.72);"></div>
<svg style="left:288.2px;top:84.5px" width="8" height="12" viewBox="0 0 8 12"><path d="M0 0 H5 V1.5 H1.5 V9 H0Z" fill="#8a8a8a"/><path d="M2.5 2 H7.5 V11.5 L5 9.5 L2.5 11.5Z" fill="#b0b0b0"/></svg>
<svg style="left:300px;top:89px" width="7" height="5" viewBox="0 0 7 5"><path d="M0.8 1 L3.5 3.8 L6.2 1" stroke="#c0c0c0" stroke-width="1" fill="none"/></svg>
<div class="r" style="left:312.70px;top:81.00px;width:1.00px;height:21.00px;background:#222;"></div>
<div class="r" style="left:361.80px;top:81.00px;width:1.00px;height:21.00px;background:#222;"></div>
<svg style="left:318.5px;top:86px" width="13" height="10" viewBox="0 0 13 10"><path d="M0 5 L5 0.5 V3.5 H12.5 V6.5 H5 V9.5Z" fill="#8a8a8a"/></svg>
<svg style="left:342.5px;top:86px" width="13" height="10" viewBox="0 0 13 10"><path d="M13 5 L8 0.5 V3.5 H0.5 V6.5 H8 V9.5Z" fill="#8a8a8a"/></svg>
<svg style="left:369.7px;top:84.5px" width="14" height="13" viewBox="0 0 14 13"><rect x="0" y="0" width="5" height="5" rx="0.8" fill="#b8b8b8"/><rect x="9.5" y="1.5" width="4.5" height="3" fill="#b8b8b8"/><rect x="0.5" y="9" width="4" height="4" rx="0.8" fill="#b8b8b8"/><rect x="9.5" y="8.5" width="4.5" height="3" fill="#b8b8b8"/><path d="M5 3 H9.5 M2.5 5 V9 M4 4 L10 9.5" stroke="#b8b8b8" stroke-width="1"/></svg>
<div class="t" style="left:392.90px;top:85.66px;font-size:10.87px;color:#8c8c8c;">WB_Card</div>
<svg style="left:445px;top:86.5px" width="7" height="10" viewBox="0 0 7 10"><path d="M1 0.8 L5.5 5 L1 9.2" stroke="#c8c8c8" stroke-width="1.1" fill="none"/></svg>
<div class="t" style="left:457.60px;top:85.24px;font-size:11.36px;color:#8c8c8c;">Event Graph</div>
<div class="t" style="right:6.50px;top:85.68px;font-size:11.2px;color:#3c3c3c;font-weight:bold;">Zoom -1</div>
<svg style="left:0;top:0" width="1589" height="805"><defs>
<linearGradient id="hfunc" x1="0" y1="0" x2="1" y2="0">
 <stop offset="0" stop-color="#4d7b9e"/><stop offset="0.4" stop-color="#3d6584"/><stop offset="0.75" stop-color="#2a3f4e"/><stop offset="1" stop-color="#1f272d"/>
</linearGradient>
<linearGradient id="hevent" x1="0" y1="0" x2="1" y2="0">
 <stop offset="0" stop-color="#a01c1c"/><stop offset="0.6" stop-color="#8e1e1e"/><stop offset="0.88" stop-color="#5a2222"/><stop offset="1" stop-color="#3e2222"/>
</linearGradient>
<linearGradient id="hshine" x1="0" y1="0" x2="0" y2="1">
 <stop offset="0" stop-color="#ffffff" stop-opacity="0.10"/><stop offset="0.08" stop-color="#ffffff" stop-opacity="0.30"/><stop offset="0.16" stop-color="#ffffff" stop-opacity="0.06"/><stop offset="0.65" stop-color="#000000" stop-opacity="0"/><stop offset="1" stop-color="#000000" stop-opacity="0.3"/>
</linearGradient>
<linearGradient id="pill" x1="0" y1="0" x2="0" y2="1">
 <stop offset="0" stop-color="#63676a"/><stop offset="0.3" stop-color="#4a4d50"/><stop offset="1" stop-color="#333537"/>
</linearGradient>
<linearGradient id="pillglowB" x1="0" y1="0" x2="1" y2="0">
 <stop offset="0" stop-color="#1ca6f2" stop-opacity="0"/><stop offset="0.25" stop-color="#1ca6f2" stop-opacity="0.55"/><stop offset="0.75" stop-color="#1ca6f2" stop-opacity="0.55"/><stop offset="1" stop-color="#1ca6f2" stop-opacity="0"/>
</linearGradient>
<linearGradient id="pillglowP" x1="0" y1="0" x2="1" y2="0">
 <stop offset="0" stop-color="#e88fb4" stop-opacity="0"/><stop offset="0.25" stop-color="#e88fb4" stop-opacity="0.55"/><stop offset="0.75" stop-color="#e88fb4" stop-opacity="0.55"/><stop offset="1" stop-color="#e88fb4" stop-opacity="0"/>
</linearGradient>
<linearGradient id="glowfade" x1="0" y1="0" x2="0" y2="1">
 <stop offset="0" stop-color="#fff" stop-opacity="1"/><stop offset="1" stop-color="#fff" stop-opacity="0"/>
</linearGradient>
<mask id="gm" maskContentUnits="objectBoundingBox"><rect width="1" height="1" fill="url(#glowfade)"/></mask>
<filter id="sh" x="-10%" y="-10%" width="120%" height="130%"><feGaussianBlur stdDeviation="1.2"/></filter>
</defs><path d="M521.00 194.10 H766.00" stroke="#f2f2f2" stroke-width="1.6" fill="none"/><path d="M861.00 193.20 H1044.00" stroke="#f2f2f2" stroke-width="1.6" fill="none"/><path d="M1107.00 193.60 H1244.00" stroke="#f2f2f2" stroke-width="1.6" fill="none"/><path d="M1306.00 193.60 H1453.00" stroke="#f2f2f2" stroke-width="1.6" fill="none"/><path d="M655.00 240.00 C701.87 240.00 719.13 210.40 766.00 210.40" stroke="#2a9ad4" stroke-width="1.4" fill="none"/><path d="M674.50 275.00 C721.10 275.00 719.40 226.70 766.00 226.70" stroke="#2a9ad4" stroke-width="1.4" fill="none"/><path d="M958.90 239.90 C997.10 239.90 1005.80 210.40 1044.00 210.40" stroke="#2a9ad4" stroke-width="1.4" fill="none"/><path d="M966.80 292.00 C1014.27 292.00 996.53 226.80 1044.00 226.80" stroke="#d888a8" stroke-width="1.4" fill="none"/><path d="M1184.40 248.20 C1216.87 248.20 1211.53 210.40 1244.00 210.40" stroke="#2a9ad4" stroke-width="1.4" fill="none"/><path d="M1183.30 282.90 C1222.23 282.90 1205.07 226.80 1244.00 226.80" stroke="#d888a8" stroke-width="1.4" fill="none"/><path d="M1410.70 248.20 C1437.47 248.20 1426.23 210.20 1453.00 210.20" stroke="#2a9ad4" stroke-width="1.4" fill="none"/><path d="M1402.80 291.90 C1441.40 291.90 1414.40 226.30 1453.00 226.30" stroke="#2a9ad4" stroke-width="1.4" fill="none"/><path d="M538.00 437.90 H689.00" stroke="#f2f2f2" stroke-width="1.6" fill="none"/><path d="M869.00 437.00 H1001.00" stroke="#f2f2f2" stroke-width="1.6" fill="none"/><path d="M547.00 637.50 H672.00" stroke="#f2f2f2" stroke-width="1.6" fill="none"/><path d="M852.00 636.50 H1001.00" stroke="#f2f2f2" stroke-width="1.6" fill="none"/><path d="M594.00 544.20 C648.70 544.20 632.80 473.60 687.50 473.60" stroke="#2a9ad4" stroke-width="1.4" fill="none"/><path d="M594.00 544.20 C662.73 544.20 602.27 673.40 671.00 673.40" stroke="#2a9ad4" stroke-width="1.4" fill="none"/><path d="M962.40 535.20 C1002.43 535.20 960.97 453.70 1001.00 453.70" stroke="#2a9ad4" stroke-width="1.4" fill="none"/><path d="M962.40 535.20 C1014.70 535.20 948.70 653.50 1001.00 653.50" stroke="#2a9ad4" stroke-width="1.4" fill="none"/><rect x="427.9" y="170.8" width="101.30000000000007" height="50.89999999999998" rx="3" fill="#000" opacity="0.55" filter="url(#sh)"/><rect x="427.4" y="169.3" width="101.30000000000007" height="50.89999999999998" rx="3" fill="#1f2020" stroke="#0e0e0e" stroke-width="0.8"/><path d="M428.0 182.8 V172.5 Q428.0 169.9 430.6 169.9 H525.5 Q528.1 169.9 528.1 172.5 V182.8 Z" fill="url(#hevent)"/><path d="M428.0 182.8 V172.5 Q428.0 169.9 430.6 169.9 H525.5 Q528.1 169.9 528.1 172.5 V182.8 Z" fill="url(#hshine)"/><rect x="428.0" y="182.8" width="100.10000000000007" height="0.8" fill="#151616"/><g transform="translate(432.60,172.80)"><path d="M4 0.6 L7.4 4 L4 7.4 L0.6 4Z" fill="none" stroke="#f4f4f4" stroke-width="1.2"/><path d="M0.2 4 L3 2 V6Z" fill="#f4f4f4"/></g><rect x="518.90" y="174.10" width="5.4" height="5.4" rx="1" fill="#2a0808" stroke="#e0393a" stroke-width="0.9"/><path d="M515.00 190.70 H518.70 L521.30 194.10 L518.70 197.50 H515.00 Z" fill="#f4f4f4" stroke="#f4f4f4" stroke-width="0.6" stroke-linejoin="round"/><circle cx="517" cy="210.7" r="2.7" fill="#1a0505" stroke="#8c0d0d" stroke-width="1.1"/><path d="M520.2 209.1 L522 210.7 L520.2 212.3Z" fill="#8c0d0d"/><g transform="translate(520.00,162.80)"><path d="M1.2 1.6 L3.4 1.6 L2.6 4.2 L3.4 4.2 L1.4 8.6 L1.7 5.4 L0.8 5.4Z" fill="#e8e8e8"/><rect x="3.6" y="0.6" width="11" height="8.6" rx="1.2" fill="#0a0a0a" stroke="#f0f0f0" stroke-width="1.1"/><path d="M5 8 L11 2" stroke="#555" stroke-width="0.8"/><path d="M7.5 9.6 H10.8 L11.6 11.6 H6.7Z" fill="#f0f0f0"/><rect x="5.5" y="11.3" width="7" height="1.2" fill="#f0f0f0"/></g><rect x="758.6" y="161.7" width="111.19999999999993" height="95.20000000000002" rx="3" fill="#000" opacity="0.55" filter="url(#sh)"/><rect x="758.1" y="160.2" width="111.19999999999993" height="95.20000000000002" rx="3" fill="#1f2020" stroke="#0e0e0e" stroke-width="0.8"/><path d="M758.7 183 V163.39999999999998 Q758.7 160.79999999999998 761.3000000000001 160.79999999999998 H866.0999999999999 Q868.6999999999999 160.79999999999998 868.6999999999999 163.39999999999998 V183 Z" fill="url(#hfunc)"/><path d="M758.7 183 V163.39999999999998 Q758.7 160.79999999999998 761.3000000000001 160.79999999999998 H866.0999999999999 Q868.6999999999999 160.79999999999998 868.6999999999999 163.39999999999998 V183 Z" fill="url(#hshine)"/><rect x="758.7" y="183" width="109.99999999999993" height="0.8" fill="#151616"/><path d="M765.20 189.80 H768.90 L771.50 193.20 L768.90 196.60 H765.20 Z" fill="#f4f4f4" stroke="#f4f4f4" stroke-width="0.6" stroke-linejoin="round"/><path d="M855.50 189.80 H859.20 L861.80 193.20 L859.20 196.60 H855.50 Z" fill="#f4f4f4" stroke="#f4f4f4" stroke-width="0.6" stroke-linejoin="round"/><circle cx="768.30" cy="210.40" r="3.45" fill="#1ca6f2"/><path d="M771.50 208.80 L773.50 210.40 L771.50 212.00Z" fill="#1ca6f2"/><circle cx="768.30" cy="226.70" r="3.45" fill="#1ca6f2"/><path d="M771.50 225.10 L773.50 226.70 L771.50 228.30Z" fill="#1ca6f2"/><circle cx="768.30" cy="244.7" r="2.7" fill="#1a0505" stroke="#8c0d0d" stroke-width="1.1"/><path d="M771.50 243.1 L773.30 244.7 L771.50 246.3Z" fill="#8c0d0d"/><rect x="815.00" y="240.40" width="7.70" height="8.50" fill="#0f0f0f" stroke="#2a2a2a" stroke-width="0.6"/><rect x="1035.9" y="161.5" width="80.69999999999982" height="76.1" rx="3" fill="#000" opacity="0.55" filter="url(#sh)"/><rect x="1035.4" y="160" width="80.69999999999982" height="76.1" rx="3" fill="#1f2020" stroke="#0e0e0e" stroke-width="0.8"/><path d="M1036.0 183 V163.2 Q1036.0 160.6 1038.6 160.6 H1112.9 Q1115.5 160.6 1115.5 163.2 V183 Z" fill="url(#hfunc)"/><path d="M1036.0 183 V163.2 Q1036.0 160.6 1038.6 160.6 H1112.9 Q1115.5 160.6 1115.5 163.2 V183 Z" fill="url(#hshine)"/><rect x="1036.0" y="183" width="79.49999999999982" height="0.8" fill="#151616"/><path d="M1042.70 190.20 H1046.40 L1049.00 193.60 L1046.40 197.00 H1042.70 Z" fill="#f4f4f4" stroke="#f4f4f4" stroke-width="0.6" stroke-linejoin="round"/><path d="M1102.50 190.20 H1106.20 L1108.80 193.60 L1106.20 197.00 H1102.50 Z" fill="#f4f4f4" stroke="#f4f4f4" stroke-width="0.6" stroke-linejoin="round"/><circle cx="1045.70" cy="210.40" r="3.45" fill="#1ca6f2"/><path d="M1048.90 208.80 L1050.90 210.40 L1048.90 212.00Z" fill="#1ca6f2"/><circle cx="1045.70" cy="226.80" r="3.45" fill="#e88fb4"/><path d="M1048.90 225.20 L1050.90 226.80 L1048.90 228.40Z" fill="#e88fb4"/><rect x="1235.3" y="161.5" width="80.69999999999982" height="76.1" rx="3" fill="#000" opacity="0.55" filter="url(#sh)"/><rect x="1234.8" y="160" width="80.69999999999982" height="76.1" rx="3" fill="#1f2020" stroke="#0e0e0e" stroke-width="0.8"/><path d="M1235.3999999999999 183 V163.2 Q1235.3999999999999 160.6 1237.9999999999998 160.6 H1312.3 Q1314.8999999999999 160.6 1314.8999999999999 163.2 V183 Z" fill="url(#hfunc)"/><path d="M1235.3999999999999 183 V163.2 Q1235.3999999999999 160.6 1237.9999999999998 160.6 H1312.3 Q1314.8999999999999 160.6 1314.8999999999999 163.2 V183 Z" fill="url(#hshine)"/><rect x="1235.3999999999999" y="183" width="79.49999999999982" height="0.8" fill="#151616"/><path d="M1242.10 190.20 H1245.80 L1248.40 193.60 L1245.80 197.00 H1242.10 Z" fill="#f4f4f4" stroke="#f4f4f4" stroke-width="0.6" stroke-linejoin="round"/><path d="M1301.90 190.20 H1305.60 L1308.20 193.60 L1305.60 197.00 H1301.90 Z" fill="#f4f4f4" stroke="#f4f4f4" stroke-width="0.6" stroke-linejoin="round"/><circle cx="1245.10" cy="210.40" r="3.45" fill="#1ca6f2"/><path d="M1248.30 208.80 L1250.30 210.40 L1248.30 212.00Z" fill="#1ca6f2"/><circle cx="1245.10" cy="226.80" r="3.45" fill="#e88fb4"/><path d="M1248.30 225.20 L1250.30 226.80 L1248.30 228.40Z" fill="#e88fb4"/><rect x="1444.8" y="161.7" width="111.20000000000005" height="95.20000000000002" rx="3" fill="#000" opacity="0.55" filter="url(#sh)"/><rect x="1444.3" y="160.2" width="111.20000000000005" height="95.20000000000002" rx="3" fill="#1f2020" stroke="#0e0e0e" stroke-width="0.8"/><path d="M1444.8999999999999 183 V163.39999999999998 Q1444.8999999999999 160.79999999999998 1447.4999999999998 160.79999999999998 H1552.3000000000002 Q1554.9 160.79999999999998 1554.9 163.39999999999998 V183 Z" fill="url(#hfunc)"/><path d="M1444.8999999999999 183 V163.39999999999998 Q1444.8999999999999 160.79999999999998 1447.4999999999998 160.79999999999998 H1552.3000000000002 Q1554.9 160.79999999999998 1554.9 163.39999999999998 V183 Z" fill="url(#hshine)"/><rect x="1444.8999999999999" y="183" width="110.00000000000004" height="0.8" fill="#151616"/><path d="M1451.40 189.80 H1455.10 L1457.70 193.20 L1455.10 196.60 H1451.40 Z" fill="#f4f4f4" stroke="#f4f4f4" stroke-width="0.6" stroke-linejoin="round"/><path d="M1541.60 190.20 H1545.20 L1548.00 193.20 L1545.20 196.20 H1541.60 Z" fill="none" stroke="#e0e0e0" stroke-width="0.85" stroke-linejoin="round"/><circle cx="1454.50" cy="210.40" r="3.45" fill="#1ca6f2"/><path d="M1457.70 208.80 L1459.70 210.40 L1457.70 212.00Z" fill="#1ca6f2"/><circle cx="1454.50" cy="226.70" r="3.45" fill="#1ca6f2"/><path d="M1457.70 225.10 L1459.70 226.70 L1457.70 228.30Z" fill="#1ca6f2"/><circle cx="1454.50" cy="244.7" r="2.7" fill="#1a0505" stroke="#8c0d0d" stroke-width="1.1"/><path d="M1457.70 243.1 L1459.50 244.7 L1457.70 246.3Z" fill="#8c0d0d"/><rect x="1501.20" y="240.40" width="7.70" height="8.50" fill="#0f0f0f" stroke="#2a2a2a" stroke-width="0.6"/><rect x="592.9" y="232.0" width="72.10000000000002" height="20.0" rx="6.2" fill="#000" opacity="0.5" filter="url(#sh)"/><rect x="592.4" y="230.5" width="72.10000000000002" height="20.0" rx="6.2" fill="url(#pill)" stroke="#141414" stroke-width="1"/><rect x="596.12" y="231.3" width="64.66000000000003" height="8.4" fill="url(#pillglowB)" mask="url(#gm)"/><circle cx="651.00" cy="240.00" r="3.45" fill="#1ca6f2"/><path d="M654.20 238.40 L656.20 240.00 L654.20 241.60Z" fill="#1ca6f2"/><rect x="592.9" y="266.3" width="91.5" height="20.0" rx="6.2" fill="#000" opacity="0.5" filter="url(#sh)"/><rect x="592.4" y="264.8" width="91.5" height="20.0" rx="6.2" fill="url(#pill)" stroke="#141414" stroke-width="1"/><rect x="596.12" y="265.6" width="84.06" height="8.4" fill="url(#pillglowB)" mask="url(#gm)"/><circle cx="670.50" cy="275.00" r="3.45" fill="#1ca6f2"/><path d="M673.70 273.40 L675.70 275.00 L673.70 276.60Z" fill="#1ca6f2"/><rect x="896.7" y="232.2" width="71.39999999999998" height="19.0" rx="5.89" fill="#000" opacity="0.5" filter="url(#sh)"/><rect x="896.2" y="230.7" width="71.39999999999998" height="19.0" rx="5.89" fill="url(#pill)" stroke="#141414" stroke-width="1"/><rect x="899.734" y="231.5" width="64.33199999999998" height="7.9799999999999995" fill="url(#pillglowB)" mask="url(#gm)"/><circle cx="954.90" cy="239.90" r="3.45" fill="#1ca6f2"/><path d="M958.10 238.30 L960.10 239.90 L958.10 241.50Z" fill="#1ca6f2"/><rect x="880.1" y="284.2" width="97.0" height="19.30000000000001" rx="5.983000000000003" fill="#000" opacity="0.5" filter="url(#sh)"/><rect x="879.6" y="282.7" width="97.0" height="19.30000000000001" rx="5.983000000000003" fill="url(#pill)" stroke="#141414" stroke-width="1"/><rect x="883.1898" y="283.5" width="89.82039999999999" height="8.106000000000005" fill="url(#pillglowP)" mask="url(#gm)"/><circle cx="962.80" cy="292.00" r="3.45" fill="#e88fb4"/><path d="M966.00 290.40 L968.00 292.00 L966.00 293.60Z" fill="#e88fb4"/><rect x="1122.5" y="240.4" width="71.59999999999991" height="19.99999999999997" rx="6.199999999999991" fill="#000" opacity="0.5" filter="url(#sh)"/><rect x="1122" y="238.9" width="71.59999999999991" height="19.99999999999997" rx="6.199999999999991" fill="url(#pill)" stroke="#141414" stroke-width="1"/><rect x="1125.72" y="239.70000000000002" width="64.15999999999993" height="8.399999999999988" fill="url(#pillglowB)" mask="url(#gm)"/><circle cx="1180.40" cy="248.20" r="3.45" fill="#1ca6f2"/><path d="M1183.60 246.60 L1185.60 248.20 L1183.60 249.80Z" fill="#1ca6f2"/><rect x="1104.6" y="274.7" width="88.5" height="20.400000000000034" rx="6.3240000000000105" fill="#000" opacity="0.5" filter="url(#sh)"/><rect x="1104.1" y="273.2" width="88.5" height="20.400000000000034" rx="6.3240000000000105" fill="url(#pill)" stroke="#141414" stroke-width="1"/><rect x="1107.8944" y="274.0" width="80.9112" height="8.568000000000014" fill="url(#pillglowP)" mask="url(#gm)"/><circle cx="1179.30" cy="282.90" r="3.45" fill="#e88fb4"/><path d="M1182.50 281.30 L1184.50 282.90 L1182.50 284.50Z" fill="#e88fb4"/><rect x="1348.8" y="240.4" width="70.90000000000009" height="19.99999999999997" rx="6.199999999999991" fill="#000" opacity="0.5" filter="url(#sh)"/><rect x="1348.3" y="238.9" width="70.90000000000009" height="19.99999999999997" rx="6.199999999999991" fill="url(#pill)" stroke="#141414" stroke-width="1"/><rect x="1352.02" y="239.70000000000002" width="63.4600000000001" height="8.399999999999988" fill="url(#pillglowB)" mask="url(#gm)"/><circle cx="1406.70" cy="248.20" r="3.45" fill="#1ca6f2"/><path d="M1409.90 246.60 L1411.90 248.20 L1409.90 249.80Z" fill="#1ca6f2"/><rect x="1314.1" y="284.4" width="99.20000000000005" height="19.0" rx="5.89" fill="#000" opacity="0.5" filter="url(#sh)"/><rect x="1313.6" y="282.9" width="99.20000000000005" height="19.0" rx="5.89" fill="url(#pill)" stroke="#141414" stroke-width="1"/><rect x="1317.134" y="283.7" width="92.13200000000005" height="7.9799999999999995" fill="url(#pillglowB)" mask="url(#gm)"/><circle cx="1398.80" cy="291.90" r="3.45" fill="#1ca6f2"/><path d="M1402.00 290.30 L1404.00 291.90 L1402.00 293.50Z" fill="#1ca6f2"/><rect x="428.0" y="415.2" width="118.5" height="33.400000000000034" rx="3" fill="#000" opacity="0.55" filter="url(#sh)"/><rect x="427.5" y="413.7" width="118.5" height="33.400000000000034" rx="3" fill="#1f2020" stroke="#0e0e0e" stroke-width="0.8"/><path d="M428.1 427.8 V416.90000000000003 Q428.1 414.3 430.70000000000005 414.3 H542.8 Q545.4 414.3 545.4 416.90000000000003 V427.8 Z" fill="url(#hevent)"/><path d="M428.1 427.8 V416.90000000000003 Q428.1 414.3 430.70000000000005 414.3 H542.8 Q545.4 414.3 545.4 416.90000000000003 V427.8 Z" fill="url(#hshine)"/><rect x="428.1" y="427.8" width="117.3" height="0.8" fill="#151616"/><g transform="translate(432.90,416.75)"><path d="M4 0.6 L7.4 4 L4 7.4 L0.6 4Z" fill="none" stroke="#f4f4f4" stroke-width="1.2"/><path d="M0.2 4 L3 2 V6Z" fill="#f4f4f4"/></g><rect x="536.50" y="418.00" width="5.4" height="5.4" rx="1" fill="#2a0808" stroke="#e0393a" stroke-width="0.9"/><path d="M532.20 434.50 H535.90 L538.50 437.90 L535.90 441.30 H532.20 Z" fill="#f4f4f4" stroke="#f4f4f4" stroke-width="0.6" stroke-linejoin="round"/><rect x="427.9" y="613.8" width="127.20000000000005" height="34.90000000000009" rx="3" fill="#000" opacity="0.55" filter="url(#sh)"/><rect x="427.4" y="612.3" width="127.20000000000005" height="34.90000000000009" rx="3" fill="#1f2020" stroke="#0e0e0e" stroke-width="0.8"/><path d="M428.0 626 V615.5 Q428.0 612.9 430.6 612.9 H551.4 Q554.0 612.9 554.0 615.5 V626 Z" fill="url(#hevent)"/><path d="M428.0 626 V615.5 Q428.0 612.9 430.6 612.9 H551.4 Q554.0 612.9 554.0 615.5 V626 Z" fill="url(#hshine)"/><rect x="428.0" y="626" width="126.00000000000004" height="0.8" fill="#151616"/><g transform="translate(432.80,615.15)"><path d="M4 0.6 L7.4 4 L4 7.4 L0.6 4Z" fill="none" stroke="#f4f4f4" stroke-width="1.2"/><path d="M0.2 4 L3 2 V6Z" fill="#f4f4f4"/></g><rect x="544.80" y="617.10" width="5.4" height="5.4" rx="1" fill="#2a0808" stroke="#e0393a" stroke-width="0.9"/><path d="M541.20 634.10 H544.90 L547.50 637.50 L544.90 640.90 H541.20 Z" fill="#f4f4f4" stroke="#f4f4f4" stroke-width="0.6" stroke-linejoin="round"/><rect x="679.9" y="405.9" width="198.69999999999993" height="187.70000000000005" rx="3" fill="#000" opacity="0.55" filter="url(#sh)"/><rect x="679.4" y="404.4" width="198.69999999999993" height="187.70000000000005" rx="3" fill="#1f2020" stroke="#0e0e0e" stroke-width="0.8"/><path d="M680.0 427.29999999999995 V407.6 Q680.0 405.0 682.6 405.0 H874.8999999999999 Q877.4999999999999 405.0 877.4999999999999 407.6 V427.29999999999995 Z" fill="url(#hfunc)"/><path d="M680.0 427.29999999999995 V407.6 Q680.0 405.0 682.6 405.0 H874.8999999999999 Q877.4999999999999 405.0 877.4999999999999 407.6 V427.29999999999995 Z" fill="url(#hshine)"/><rect x="680.0" y="427.29999999999995" width="197.49999999999994" height="0.8" fill="#151616"/><path d="M686.60 433.60 H690.30 L692.90 437.00 L690.30 440.40 H686.60 Z" fill="#f4f4f4" stroke="#f4f4f4" stroke-width="0.6" stroke-linejoin="round"/><path d="M863.70 433.60 H867.40 L870.00 437.00 L867.40 440.40 H863.70 Z" fill="#f4f4f4" stroke="#f4f4f4" stroke-width="0.6" stroke-linejoin="round"/><circle cx="690.30" cy="455.30" r="2.75" fill="#121414" stroke="#1ca6f2" stroke-width="1.35" stroke-opacity="0.85"/><path d="M693.50 453.70 L695.50 455.30 L693.50 456.90Z" fill="#1ca6f2"/><rect x="720.20" y="449.70" width="21.10" height="11.50" fill="#1f2020" stroke="#a9a9a9" stroke-width="0.9" rx="1"/><circle cx="865.10" cy="454.30" r="2.75" fill="#121414" stroke="#1ca6f2" stroke-width="1.35" stroke-opacity="0.85"/><path d="M868.30 452.70 L870.30 454.30 L868.30 455.90Z" fill="#1ca6f2"/><circle cx="690.30" cy="473.90" r="3.45" fill="#1ca6f2"/><path d="M693.50 472.30 L695.50 473.90 L693.50 475.50Z" fill="#1ca6f2"/><circle cx="690.30" cy="491.80" r="2.75" fill="#121414" stroke="#7cc83e" stroke-width="1.35" stroke-opacity="0.85"/><path d="M693.50 490.20 L695.50 491.80 L693.50 493.40Z" fill="#7cc83e"/><rect x="741.10" y="486.70" width="16.80" height="10.10" fill="#1f2020" stroke="#a9a9a9" stroke-width="0.9" rx="1"/><circle cx="690.30" cy="511.60" r="2.75" fill="#121414" stroke="#35d3a8" stroke-width="1.35" stroke-opacity="0.85"/><path d="M693.50 510.00 L695.50 511.60 L693.50 513.20Z" fill="#35d3a8"/><rect x="759.10" y="506.50" width="9.50" height="10.70" fill="#1f2020" stroke="#a9a9a9" stroke-width="0.9" rx="1"/><circle cx="690.30" cy="537.30" r="2.75" fill="#121414" stroke="#1f6f60" stroke-width="1.35" stroke-opacity="0.85"/><path d="M693.50 535.70 L695.50 537.30 L693.50 538.90Z" fill="#1f6f60"/><rect x="700.30" y="534.10" width="103.9" height="14.8" rx="1.5" fill="#111111" stroke="#2a2a2a" stroke-width="0.6"/><path d="M791.30 540.30 L793.80 542.80 L796.30 540.30" stroke="#d0d0d0" stroke-width="0.9" fill="none"/><circle cx="690.30" cy="563.10" r="2.75" fill="#121414" stroke="#7cc83e" stroke-width="1.35" stroke-opacity="0.85"/><path d="M693.50 561.50 L695.50 563.10 L693.50 564.70Z" fill="#7cc83e"/><rect x="750.00" y="557.50" width="15.50" height="11.20" fill="#1f2020" stroke="#a9a9a9" stroke-width="0.9" rx="1"/><circle cx="690.30" cy="581.60" r="2.7" fill="#1a0505" stroke="#8c0d0d" stroke-width="1.1"/><path d="M693.50 580.00 L695.30 581.60 L693.50 583.20Z" fill="#8c0d0d"/><rect x="743.60" y="577.10" width="9.20" height="9.40" fill="#0f0f0f" stroke="#2a2a2a" stroke-width="0.6"/><g transform="translate(869.90,398.50)"><path d="M1.2 1.6 L3.4 1.6 L2.6 4.2 L3.4 4.2 L1.4 8.6 L1.7 5.4 L0.8 5.4Z" fill="#e8e8e8"/><rect x="3.6" y="0.6" width="11" height="8.6" rx="1.2" fill="#0a0a0a" stroke="#f0f0f0" stroke-width="1.1"/><path d="M5 8 L11 2" stroke="#555" stroke-width="0.8"/><path d="M7.5 9.6 H10.8 L11.6 11.6 H6.7Z" fill="#f0f0f0"/><rect x="5.5" y="11.3" width="7" height="1.2" fill="#f0f0f0"/></g><rect x="663.1" y="605.4" width="198.69999999999993" height="187.70000000000005" rx="3" fill="#000" opacity="0.55" filter="url(#sh)"/><rect x="662.6" y="603.9" width="198.69999999999993" height="187.70000000000005" rx="3" fill="#1f2020" stroke="#0e0e0e" stroke-width="0.8"/><path d="M663.2 626.8 V607.1 Q663.2 604.5 665.8000000000001 604.5 H858.0999999999999 Q860.6999999999999 604.5 860.6999999999999 607.1 V626.8 Z" fill="url(#hfunc)"/><path d="M663.2 626.8 V607.1 Q663.2 604.5 665.8000000000001 604.5 H858.0999999999999 Q860.6999999999999 604.5 860.6999999999999 607.1 V626.8 Z" fill="url(#hshine)"/><rect x="663.2" y="626.8" width="197.49999999999994" height="0.8" fill="#151616"/><path d="M669.80 633.10 H673.50 L676.10 636.50 L673.50 639.90 H669.80 Z" fill="#f4f4f4" stroke="#f4f4f4" stroke-width="0.6" stroke-linejoin="round"/><path d="M846.90 633.10 H850.60 L853.20 636.50 L850.60 639.90 H846.90 Z" fill="#f4f4f4" stroke="#f4f4f4" stroke-width="0.6" stroke-linejoin="round"/><circle cx="673.50" cy="654.80" r="2.75" fill="#121414" stroke="#1ca6f2" stroke-width="1.35" stroke-opacity="0.85"/><path d="M676.70 653.20 L678.70 654.80 L676.70 656.40Z" fill="#1ca6f2"/><rect x="703.40" y="649.20" width="21.10" height="11.50" fill="#1f2020" stroke="#a9a9a9" stroke-width="0.9" rx="1"/><circle cx="848.30" cy="653.80" r="2.75" fill="#121414" stroke="#1ca6f2" stroke-width="1.35" stroke-opacity="0.85"/><path d="M851.50 652.20 L853.50 653.80 L851.50 655.40Z" fill="#1ca6f2"/><circle cx="673.50" cy="673.40" r="3.45" fill="#1ca6f2"/><path d="M676.70 671.80 L678.70 673.40 L676.70 675.00Z" fill="#1ca6f2"/><circle cx="673.50" cy="691.30" r="2.75" fill="#121414" stroke="#7cc83e" stroke-width="1.35" stroke-opacity="0.85"/><path d="M676.70 689.70 L678.70 691.30 L676.70 692.90Z" fill="#7cc83e"/><rect x="724.30" y="686.20" width="16.80" height="10.10" fill="#1f2020" stroke="#a9a9a9" stroke-width="0.9" rx="1"/><circle cx="673.50" cy="711.10" r="2.75" fill="#121414" stroke="#35d3a8" stroke-width="1.35" stroke-opacity="0.85"/><path d="M676.70 709.50 L678.70 711.10 L676.70 712.70Z" fill="#35d3a8"/><rect x="742.30" y="706.00" width="9.50" height="10.70" fill="#1f2020" stroke="#a9a9a9" stroke-width="0.9" rx="1"/><circle cx="673.50" cy="736.80" r="2.75" fill="#121414" stroke="#1f6f60" stroke-width="1.35" stroke-opacity="0.85"/><path d="M676.70 735.20 L678.70 736.80 L676.70 738.40Z" fill="#1f6f60"/><rect x="683.50" y="733.60" width="103.9" height="14.8" rx="1.5" fill="#111111" stroke="#2a2a2a" stroke-width="0.6"/><path d="M774.50 739.80 L777.00 742.30 L779.50 739.80" stroke="#d0d0d0" stroke-width="0.9" fill="none"/><circle cx="673.50" cy="762.60" r="2.75" fill="#121414" stroke="#7cc83e" stroke-width="1.35" stroke-opacity="0.85"/><path d="M676.70 761.00 L678.70 762.60 L676.70 764.20Z" fill="#7cc83e"/><rect x="733.20" y="757.00" width="15.50" height="11.20" fill="#1f2020" stroke="#a9a9a9" stroke-width="0.9" rx="1"/><circle cx="673.50" cy="781.10" r="2.7" fill="#1a0505" stroke="#8c0d0d" stroke-width="1.1"/><path d="M676.70 779.50 L678.50 781.10 L676.70 782.70Z" fill="#8c0d0d"/><rect x="726.80" y="776.60" width="9.20" height="9.40" fill="#0f0f0f" stroke="#2a2a2a" stroke-width="0.6"/><g transform="translate(853.10,598.00)"><path d="M1.2 1.6 L3.4 1.6 L2.6 4.2 L3.4 4.2 L1.4 8.6 L1.7 5.4 L0.8 5.4Z" fill="#e8e8e8"/><rect x="3.6" y="0.6" width="11" height="8.6" rx="1.2" fill="#0a0a0a" stroke="#f0f0f0" stroke-width="1.1"/><path d="M5 8 L11 2" stroke="#555" stroke-width="0.8"/><path d="M7.5 9.6 H10.8 L11.6 11.6 H6.7Z" fill="#f0f0f0"/><rect x="5.5" y="11.3" width="7" height="1.2" fill="#f0f0f0"/></g><rect x="992.6" y="405.8" width="137.4999999999999" height="77.69999999999999" rx="3" fill="#000" opacity="0.55" filter="url(#sh)"/><rect x="992.1" y="404.3" width="137.4999999999999" height="77.69999999999999" rx="3" fill="#1f2020" stroke="#0e0e0e" stroke-width="0.8"/><path d="M992.7 427.9 V407.50000000000006 Q992.7 404.90000000000003 995.3000000000001 404.90000000000003 H1126.4 Q1129.0 404.90000000000003 1129.0 407.50000000000006 V427.9 Z" fill="url(#hfunc)"/><path d="M992.7 427.9 V407.50000000000006 Q992.7 404.90000000000003 995.3000000000001 404.90000000000003 H1126.4 Q1129.0 404.90000000000003 1129.0 407.50000000000006 V427.9 Z" fill="url(#hshine)"/><rect x="992.7" y="427.9" width="136.2999999999999" height="0.8" fill="#151616"/><path d="M999.30 434.00 H1003.00 L1005.60 437.40 L1003.00 440.80 H999.30 Z" fill="#f4f4f4" stroke="#f4f4f4" stroke-width="0.6" stroke-linejoin="round"/><path d="M1116.20 434.40 H1119.80 L1122.60 437.40 L1119.80 440.40 H1116.20 Z" fill="none" stroke="#e0e0e0" stroke-width="0.85" stroke-linejoin="round"/><circle cx="1002.30" cy="453.70" r="3.45" fill="#1ca6f2"/><path d="M1005.50 452.10 L1007.50 453.70 L1005.50 455.30Z" fill="#1ca6f2"/><circle cx="1002.3" cy="471.1" r="2.7" fill="#1a0505" stroke="#8c0d0d" stroke-width="1.1"/><path d="M1005.5 469.5 L1007.3 471.1 L1005.5 472.7Z" fill="#8c0d0d"/><rect x="1031.30" y="466.60" width="8.60" height="9.30" fill="#0f0f0f" stroke="#2a2a2a" stroke-width="0.6"/><rect x="992.6" y="605.2" width="137.4999999999999" height="59.5" rx="3" fill="#000" opacity="0.55" filter="url(#sh)"/><rect x="992.1" y="603.7" width="137.4999999999999" height="59.5" rx="3" fill="#1f2020" stroke="#0e0e0e" stroke-width="0.8"/><path d="M992.7 626.6 V606.9000000000001 Q992.7 604.3000000000001 995.3000000000001 604.3000000000001 H1126.4 Q1129.0 604.3000000000001 1129.0 606.9000000000001 V626.6 Z" fill="url(#hfunc)"/><path d="M992.7 626.6 V606.9000000000001 Q992.7 604.3000000000001 995.3000000000001 604.3000000000001 H1126.4 Q1129.0 604.3000000000001 1129.0 606.9000000000001 V626.6 Z" fill="url(#hshine)"/><rect x="992.7" y="626.6" width="136.2999999999999" height="0.8" fill="#151616"/><path d="M999.30 633.40 H1003.00 L1005.60 636.80 L1003.00 640.20 H999.30 Z" fill="#f4f4f4" stroke="#f4f4f4" stroke-width="0.6" stroke-linejoin="round"/><path d="M1116.20 633.80 H1119.80 L1122.60 636.80 L1119.80 639.80 H1116.20 Z" fill="none" stroke="#e0e0e0" stroke-width="0.85" stroke-linejoin="round"/><circle cx="1002.30" cy="653.10" r="3.45" fill="#1ca6f2"/><path d="M1005.50 651.50 L1007.50 653.10 L1005.50 654.70Z" fill="#1ca6f2"/><rect x="531.7" y="535.9" width="72.0" height="20.300000000000068" rx="6.2930000000000215" fill="#000" opacity="0.5" filter="url(#sh)"/><rect x="531.2" y="534.4" width="72.0" height="20.300000000000068" rx="6.2930000000000215" fill="url(#pill)" stroke="#141414" stroke-width="1"/><rect x="534.9758" y="535.1999999999999" width="64.44839999999998" height="8.526000000000028" fill="url(#pillglowB)" mask="url(#gm)"/><circle cx="590.00" cy="544.20" r="3.45" fill="#1ca6f2"/><path d="M593.20 542.60 L595.20 544.20 L593.20 545.80Z" fill="#1ca6f2"/><rect x="896.4" y="526.2" width="75.80000000000007" height="22.09999999999991" rx="6.850999999999972" fill="#000" opacity="0.5" filter="url(#sh)"/><rect x="895.9" y="524.7" width="75.80000000000007" height="22.09999999999991" rx="6.850999999999972" fill="url(#pill)" stroke="#141414" stroke-width="1"/><rect x="900.0106" y="525.5" width="67.5788000000001" height="9.281999999999961" fill="url(#pillglowB)" mask="url(#gm)"/><circle cx="958.40" cy="535.20" r="3.45" fill="#1ca6f2"/><path d="M961.60 533.60 L963.60 535.20 L961.60 536.80Z" fill="#1ca6f2"/></svg>
<div class="t" style="left:443.50px;top:173.51px;font-size:7.4px;color:#ececec;text-shadow:0.5px 0.8px 0.8px rgba(0,0,0,0.9);-webkit-text-stroke:0.2px #ececec;">Event Pre Construct</div>
<div class="t" style="right:1079.00px;top:207.20px;font-size:7.0px;color:#e4e4e4;text-shadow:0 0.6px 0.6px rgba(0,0,0,0.8);-webkit-text-stroke:0.15px #e4e4e4;">Is Design Time</div>
<div class="t" style="left:764.50px;top:162.65px;font-size:9.0px;color:#86bde6;font-style:italic;font-family:'Liberation Serif',serif;">ƒ</div>
<div class="t" style="left:774.10px;top:163.01px;font-size:7.4px;color:#ececec;text-shadow:0.5px 0.8px 0.8px rgba(0,0,0,0.9);-webkit-text-stroke:0.2px #ececec;">Set Brush from Texture</div>
<div class="t" style="left:774.10px;top:173.81px;font-size:7.05px;color:#93b0ab;font-style:italic;">Target is Image</div>
<div class="t" style="left:776.70px;top:206.90px;font-size:7.0px;color:#e4e4e4;text-shadow:0 0.6px 0.6px rgba(0,0,0,0.8);-webkit-text-stroke:0.15px #e4e4e4;">Target</div>
<div class="t" style="left:776.70px;top:223.20px;font-size:7.0px;color:#e4e4e4;text-shadow:0 0.6px 0.6px rgba(0,0,0,0.8);-webkit-text-stroke:0.15px #e4e4e4;">Texture</div>
<div class="t" style="left:776.70px;top:241.24px;font-size:6.95px;color:#e4e4e4;text-shadow:0 0.6px 0.6px rgba(0,0,0,0.8);-webkit-text-stroke:0.15px #e4e4e4;">Match Size</div>
<div class="t" style="left:1042.00px;top:162.65px;font-size:9.0px;color:#86bde6;font-style:italic;font-family:'Liberation Serif',serif;">ƒ</div>
<div class="t" style="left:1051.80px;top:163.09px;font-size:7.3px;color:#ececec;text-shadow:0.5px 0.8px 0.8px rgba(0,0,0,0.9);-webkit-text-stroke:0.2px #ececec;">SetText (Text)</div>
<div class="t" style="left:1051.80px;top:173.81px;font-size:7.05px;color:#93b0ab;font-style:italic;">Target is Text</div>
<div class="t" style="left:1054.50px;top:206.90px;font-size:7.0px;color:#e4e4e4;text-shadow:0 0.6px 0.6px rgba(0,0,0,0.8);-webkit-text-stroke:0.15px #e4e4e4;">Target</div>
<div class="t" style="left:1054.50px;top:223.30px;font-size:7.0px;color:#e4e4e4;text-shadow:0 0.6px 0.6px rgba(0,0,0,0.8);-webkit-text-stroke:0.15px #e4e4e4;">In Text</div>
<div class="t" style="left:1241.40px;top:162.65px;font-size:9.0px;color:#86bde6;font-style:italic;font-family:'Liberation Serif',serif;">ƒ</div>
<div class="t" style="left:1251.20px;top:163.09px;font-size:7.3px;color:#ececec;text-shadow:0.5px 0.8px 0.8px rgba(0,0,0,0.9);-webkit-text-stroke:0.2px #ececec;">SetText (Text)</div>
<div class="t" style="left:1251.20px;top:173.81px;font-size:7.05px;color:#93b0ab;font-style:italic;">Target is Text</div>
<div class="t" style="left:1253.90px;top:206.90px;font-size:7.0px;color:#e4e4e4;text-shadow:0 0.6px 0.6px rgba(0,0,0,0.8);-webkit-text-stroke:0.15px #e4e4e4;">Target</div>
<div class="t" style="left:1253.90px;top:223.30px;font-size:7.0px;color:#e4e4e4;text-shadow:0 0.6px 0.6px rgba(0,0,0,0.8);-webkit-text-stroke:0.15px #e4e4e4;">In Text</div>
<div class="t" style="left:1450.70px;top:162.65px;font-size:9.0px;color:#86bde6;font-style:italic;font-family:'Liberation Serif',serif;">ƒ</div>
<div class="t" style="left:1460.30px;top:163.01px;font-size:7.4px;color:#ececec;text-shadow:0.5px 0.8px 0.8px rgba(0,0,0,0.9);-webkit-text-stroke:0.2px #ececec;">Set Brush from Texture</div>
<div class="t" style="left:1460.30px;top:173.81px;font-size:7.05px;color:#93b0ab;font-style:italic;">Target is Image</div>
<div class="t" style="left:1462.90px;top:206.90px;font-size:7.0px;color:#e4e4e4;text-shadow:0 0.6px 0.6px rgba(0,0,0,0.8);-webkit-text-stroke:0.15px #e4e4e4;">Target</div>
<div class="t" style="left:1462.90px;top:223.20px;font-size:7.0px;color:#e4e4e4;text-shadow:0 0.6px 0.6px rgba(0,0,0,0.8);-webkit-text-stroke:0.15px #e4e4e4;">Texture</div>
<div class="t" style="left:1462.90px;top:241.24px;font-size:6.95px;color:#e4e4e4;text-shadow:0 0.6px 0.6px rgba(0,0,0,0.8);-webkit-text-stroke:0.15px #e4e4e4;">Match Size</div>
<div class="t" style="right:944.30px;top:236.62px;font-size:6.8px;color:#ededed;text-shadow:0 0.6px 0.6px rgba(0,0,0,0.9);-webkit-text-stroke:0.15px #ededed;">Card Image</div>
<div class="t" style="right:924.80px;top:271.62px;font-size:6.8px;color:#ededed;text-shadow:0 0.6px 0.6px rgba(0,0,0,0.9);-webkit-text-stroke:0.15px #ededed;">Card Image Texture</div>
<div class="t" style="right:640.40px;top:236.52px;font-size:6.8px;color:#ededed;text-shadow:0 0.6px 0.6px rgba(0,0,0,0.9);-webkit-text-stroke:0.15px #ededed;">Card Name</div>
<div class="t" style="right:632.50px;top:288.62px;font-size:6.8px;color:#ededed;text-shadow:0 0.6px 0.6px rgba(0,0,0,0.9);-webkit-text-stroke:0.15px #ededed;">Card Name to Display</div>
<div class="t" style="right:414.90px;top:244.82px;font-size:6.8px;color:#ededed;text-shadow:0 0.6px 0.6px rgba(0,0,0,0.9);-webkit-text-stroke:0.15px #ededed;">Card Number</div>
<div class="t" style="right:416.00px;top:279.52px;font-size:6.8px;color:#ededed;text-shadow:0 0.6px 0.6px rgba(0,0,0,0.9);-webkit-text-stroke:0.15px #ededed;">Number to Display</div>
<div class="t" style="right:188.60px;top:244.82px;font-size:6.8px;color:#ededed;text-shadow:0 0.6px 0.6px rgba(0,0,0,0.9);-webkit-text-stroke:0.15px #ededed;">Card Frame</div>
<div class="t" style="right:196.50px;top:288.52px;font-size:6.8px;color:#ededed;text-shadow:0 0.6px 0.6px rgba(0,0,0,0.9);-webkit-text-stroke:0.15px #ededed;">Card Frame to Display</div>
<div class="t" style="left:443.50px;top:417.59px;font-size:7.37px;color:#ececec;text-shadow:0.5px 0.8px 0.8px rgba(0,0,0,0.9);-webkit-text-stroke:0.2px #ececec;">On Hovered (CardButton)</div>
<div class="t" style="left:443.40px;top:615.99px;font-size:7.37px;color:#ececec;text-shadow:0.5px 0.8px 0.8px rgba(0,0,0,0.9);-webkit-text-stroke:0.2px #ececec;">On Unhovered (CardButton)</div>
<div class="t" style="left:685.30px;top:406.65px;font-size:9.0px;color:#86bde6;font-style:italic;font-family:'Liberation Serif',serif;">ƒ</div>
<div class="t" style="left:694.70px;top:407.09px;font-size:7.3px;color:#ececec;text-shadow:0.5px 0.8px 0.8px rgba(0,0,0,0.9);-webkit-text-stroke:0.2px #ececec;">Play Animation</div>
<div class="t" style="left:694.70px;top:416.75px;font-size:7.0px;color:#93b0ab;font-style:italic;">Target is User Widget</div>
<div class="t" style="left:698.00px;top:451.54px;font-size:7.3px;color:#e4e4e4;text-shadow:0 0.6px 0.6px rgba(0,0,0,0.8);-webkit-text-stroke:0.15px #e4e4e4;">Target</div>
<div class="t" style="left:723.70px;top:451.60px;font-size:8.0px;color:#d4d4d4;">self</div>
<div class="t" style="right:729.50px;top:450.85px;font-size:6.94px;color:#e4e4e4;text-shadow:0 0.6px 0.6px rgba(0,0,0,0.8);-webkit-text-stroke:0.15px #e4e4e4;">Return Value</div>
<div class="t" style="left:698.00px;top:470.40px;font-size:7.0px;color:#e4e4e4;text-shadow:0 0.6px 0.6px rgba(0,0,0,0.8);-webkit-text-stroke:0.15px #e4e4e4;">In Animation</div>
<div class="t" style="left:698.00px;top:488.09px;font-size:7.25px;color:#e4e4e4;text-shadow:0 0.6px 0.6px rgba(0,0,0,0.8);-webkit-text-stroke:0.15px #e4e4e4;">Start at Time</div>
<div class="t" style="left:744.10px;top:488.39px;font-size:7.9px;color:#d4d4d4;">0.0</div>
<div class="t" style="left:698.00px;top:508.17px;font-size:6.92px;color:#e4e4e4;text-shadow:0 0.6px 0.6px rgba(0,0,0,0.8);-webkit-text-stroke:0.15px #e4e4e4;">Num Loops to Play</div>
<div class="t" style="left:761.80px;top:508.39px;font-size:7.9px;color:#d4d4d4;">1</div>
<div class="t" style="left:698.00px;top:526.20px;font-size:7.0px;color:#e4e4e4;text-shadow:0 0.6px 0.6px rgba(0,0,0,0.8);-webkit-text-stroke:0.15px #e4e4e4;">Play Mode</div>
<div class="t" style="left:706.20px;top:539.04px;font-size:5.6px;color:#9a9a9a;">Forward</div>
<div class="t" style="left:698.00px;top:559.72px;font-size:6.86px;color:#e4e4e4;text-shadow:0 0.6px 0.6px rgba(0,0,0,0.8);-webkit-text-stroke:0.15px #e4e4e4;">Playback Speed</div>
<div class="t" style="left:752.60px;top:559.68px;font-size:7.9px;color:#d4d4d4;">1.0</div>
<div class="t" style="left:698.00px;top:578.12px;font-size:6.98px;color:#e4e4e4;text-shadow:0 0.6px 0.6px rgba(0,0,0,0.8);-webkit-text-stroke:0.15px #e4e4e4;">Restore State</div>
<div class="t" style="left:668.50px;top:606.15px;font-size:9.0px;color:#86bde6;font-style:italic;font-family:'Liberation Serif',serif;">ƒ</div>
<div class="t" style="left:677.90px;top:606.59px;font-size:7.3px;color:#ececec;text-shadow:0.5px 0.8px 0.8px rgba(0,0,0,0.9);-webkit-text-stroke:0.2px #ececec;">Play Animation</div>
<div class="t" style="left:677.90px;top:616.25px;font-size:7.0px;color:#93b0ab;font-style:italic;">Target is User Widget</div>
<div class="t" style="left:681.20px;top:651.04px;font-size:7.3px;color:#e4e4e4;text-shadow:0 0.6px 0.6px rgba(0,0,0,0.8);-webkit-text-stroke:0.15px #e4e4e4;">Target</div>
<div class="t" style="left:706.90px;top:651.10px;font-size:8.0px;color:#d4d4d4;">self</div>
<div class="t" style="right:746.30px;top:650.35px;font-size:6.94px;color:#e4e4e4;text-shadow:0 0.6px 0.6px rgba(0,0,0,0.8);-webkit-text-stroke:0.15px #e4e4e4;">Return Value</div>
<div class="t" style="left:681.20px;top:669.90px;font-size:7.0px;color:#e4e4e4;text-shadow:0 0.6px 0.6px rgba(0,0,0,0.8);-webkit-text-stroke:0.15px #e4e4e4;">In Animation</div>
<div class="t" style="left:681.20px;top:687.59px;font-size:7.25px;color:#e4e4e4;text-shadow:0 0.6px 0.6px rgba(0,0,0,0.8);-webkit-text-stroke:0.15px #e4e4e4;">Start at Time</div>
<div class="t" style="left:727.30px;top:687.88px;font-size:7.9px;color:#d4d4d4;">0.0</div>
<div class="t" style="left:681.20px;top:707.67px;font-size:6.92px;color:#e4e4e4;text-shadow:0 0.6px 0.6px rgba(0,0,0,0.8);-webkit-text-stroke:0.15px #e4e4e4;">Num Loops to Play</div>
<div class="t" style="left:745.00px;top:707.88px;font-size:7.9px;color:#d4d4d4;">1</div>
<div class="t" style="left:681.20px;top:725.70px;font-size:7.0px;color:#e4e4e4;text-shadow:0 0.6px 0.6px rgba(0,0,0,0.8);-webkit-text-stroke:0.15px #e4e4e4;">Play Mode</div>
<div class="t" style="left:689.40px;top:738.54px;font-size:5.6px;color:#9a9a9a;">Reverse</div>
<div class="t" style="left:681.20px;top:759.22px;font-size:6.86px;color:#e4e4e4;text-shadow:0 0.6px 0.6px rgba(0,0,0,0.8);-webkit-text-stroke:0.15px #e4e4e4;">Playback Speed</div>
<div class="t" style="left:735.80px;top:759.18px;font-size:7.9px;color:#d4d4d4;">1.0</div>
<div class="t" style="left:681.20px;top:777.62px;font-size:6.98px;color:#e4e4e4;text-shadow:0 0.6px 0.6px rgba(0,0,0,0.8);-webkit-text-stroke:0.15px #e4e4e4;">Restore State</div>
<div class="t" style="left:998.20px;top:406.65px;font-size:9.0px;color:#86bde6;font-style:italic;font-family:'Liberation Serif',serif;">ƒ</div>
<div class="t" style="left:1007.90px;top:407.18px;font-size:7.32px;color:#ececec;text-shadow:0.5px 0.8px 0.8px rgba(0,0,0,0.9);-webkit-text-stroke:0.2px #ececec;">Activate System</div>
<div class="t" style="left:1007.90px;top:417.42px;font-size:7.04px;color:#93b0ab;font-style:italic;">Target is Niagara System Widget</div>
<div class="t" style="left:1010.70px;top:450.10px;font-size:7.12px;color:#e4e4e4;text-shadow:0 0.6px 0.6px rgba(0,0,0,0.8);-webkit-text-stroke:0.15px #e4e4e4;">Target</div>
<div class="t" style="left:1010.70px;top:467.94px;font-size:6.6px;color:#e4e4e4;text-shadow:0 0.6px 0.6px rgba(0,0,0,0.8);-webkit-text-stroke:0.15px #e4e4e4;">Reset</div>
<div class="t" style="left:998.20px;top:606.05px;font-size:9.0px;color:#86bde6;font-style:italic;font-family:'Liberation Serif',serif;">ƒ</div>
<div class="t" style="left:1007.90px;top:606.58px;font-size:7.32px;color:#ececec;text-shadow:0.5px 0.8px 0.8px rgba(0,0,0,0.9);-webkit-text-stroke:0.2px #ececec;">Deactivate System</div>
<div class="t" style="left:1007.90px;top:616.82px;font-size:7.04px;color:#93b0ab;font-style:italic;">Target is Niagara System Widget</div>
<div class="t" style="left:1010.70px;top:649.50px;font-size:7.12px;color:#e4e4e4;text-shadow:0 0.6px 0.6px rgba(0,0,0,0.8);-webkit-text-stroke:0.15px #e4e4e4;">Target</div>
<div class="t" style="right:1005.30px;top:540.82px;font-size:6.8px;color:#ededed;text-shadow:0 0.6px 0.6px rgba(0,0,0,0.9);-webkit-text-stroke:0.15px #ededed;">A Hover</div>
<div class="t" style="right:636.90px;top:531.82px;font-size:6.8px;color:#ededed;text-shadow:0 0.6px 0.6px rgba(0,0,0,0.9);-webkit-text-stroke:0.15px #ededed;">NS Hover Card</div>
<svg style="left:1565px;top:313px" width="8" height="8" viewBox="0 0 8 8"><path d="M7 0.3 V7.5 H0 Z" fill="#e8e8e8" opacity="0.85"/><path d="M3 6.5 L6.5 3 M5 7 L7 5" stroke="#777" stroke-width="0.5"/></svg>
<svg style="left:1132.5px;top:802.5px" width="8" height="8" viewBox="0 0 8 8"><path d="M7 0.3 V7.5 H0 Z" fill="#e8e8e8" opacity="0.85"/></svg>
<div class="t" style="left:1263.00px;top:796.84px;font-size:31.6px;color:#3a3a3a;font-weight:bold;">WIDGET BLUEPRINT</div>
</body></html>
